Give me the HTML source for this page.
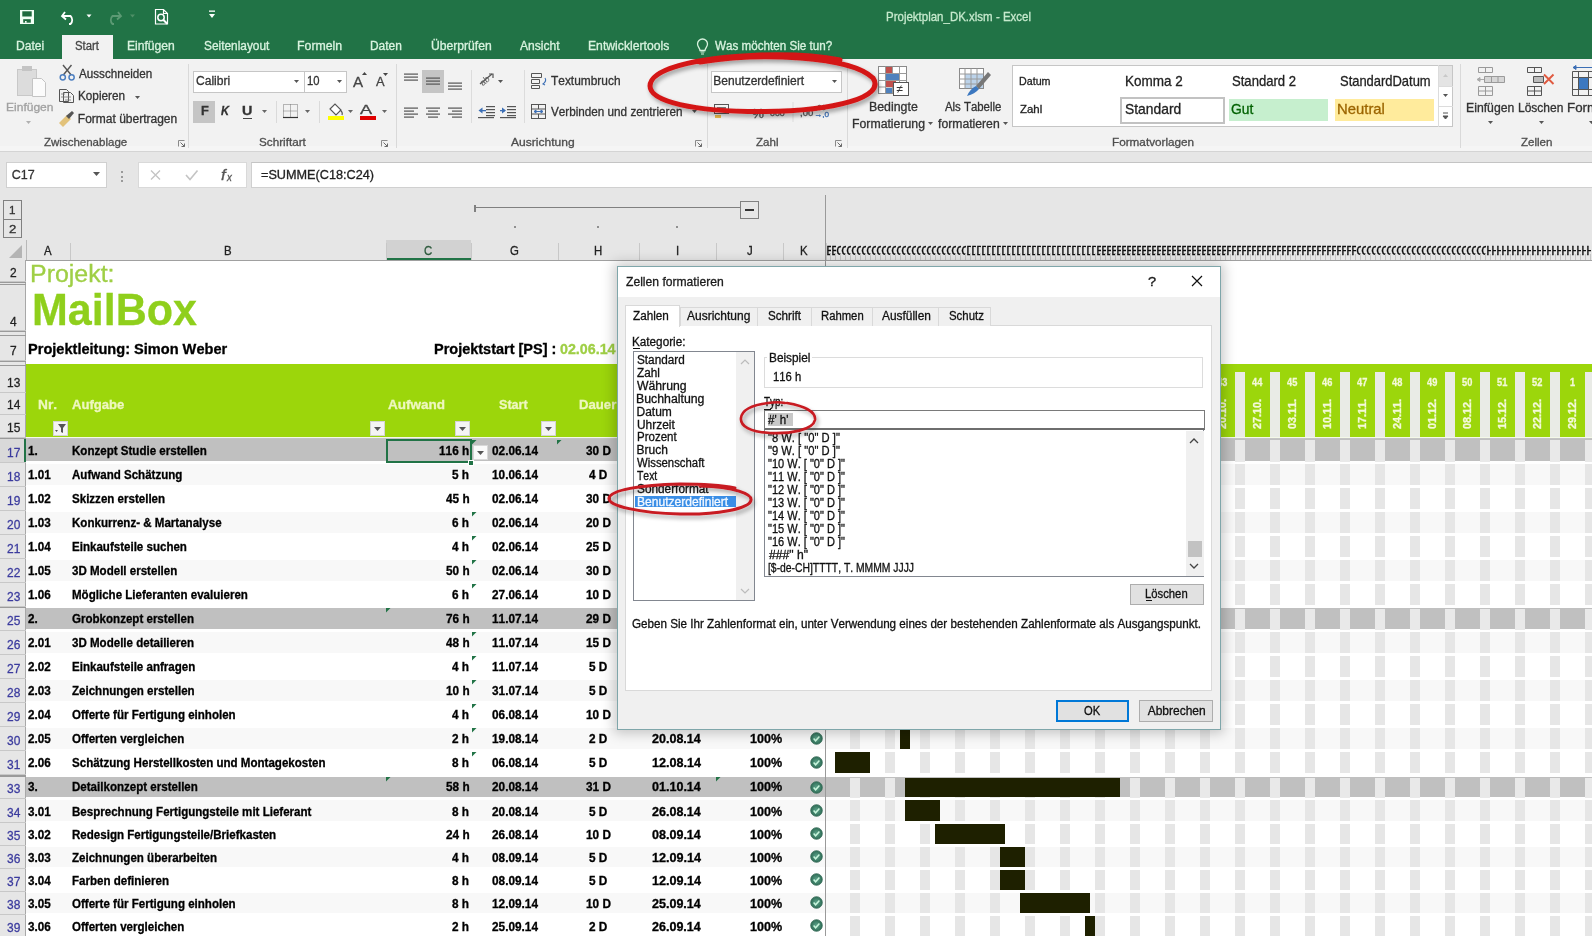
<!DOCTYPE html>
<html><head><meta charset="utf-8">
<style>
*{margin:0;padding:0;box-sizing:border-box}
html,body{width:1592px;height:936px;overflow:hidden;background:#fff;font-family:"Liberation Sans",sans-serif;color:#000;font-kerning:none}
body{will-change:transform}
.a{position:absolute}
.t{position:absolute;white-space:nowrap;line-height:1;transform-origin:0 0}
.k{-webkit-text-stroke:0.25px currentColor}
.t{-webkit-text-stroke:0.3px currentColor}
.t.k{-webkit-text-stroke:0.3px currentColor}
svg{position:absolute;overflow:visible}
</style></head><body>
<div class="a" style="left:0px;top:0px;width:1592px;height:59px;background:#217346;"></div>
<svg style="left:0;top:0" width="240" height="34">
<rect x="20" y="10" width="14" height="14" fill="#f2fff6"/>
<rect x="22.3" y="11.3" width="9.4" height="5.2" fill="#1e6b3e"/>
<rect x="23.2" y="19.2" width="7.6" height="3.5" fill="#1e6b3e"/>
<rect x="25" y="21" width="1.6" height="1.8" fill="#f2fff6"/>
<path d="M65 12 l-3 4 l4 3.5 M62.5 16 h8 a5.5 5.5 0 0 1 0 8 h-1.5" fill="none" stroke="#fff" stroke-width="1.8"/>
<path d="M86.5 14.5h5l-2.5 3z" fill="#fff"/>
<path d="M118 12 l3 4 l-4 3.5 M120.5 16 h-8 a5.5 5.5 0 0 0 0 8 h1.5" fill="none" stroke="#5c9a74" stroke-width="1.8"/>
<path d="M130 14.5h5l-2.5 3z" fill="#4f8f67"/>
<path d="M155.5 9.5h8l4 4v10.5h-12z M163.5 9.5v4h4" fill="none" stroke="#fff" stroke-width="1.2"/>
<circle cx="161" cy="17.5" r="3.2" fill="none" stroke="#fff" stroke-width="1.5"/>
<path d="M163.2 19.7l4 4" stroke="#fff" stroke-width="2"/>
<rect x="209" y="10.5" width="6" height="1.3" fill="#fff"/>
<path d="M209 14h6l-3 4z" fill="#fff"/>
</svg>
<div class="t" style="left:886.46px;top:10.49px;font-size:13px;color:#c6e9cd;transform:scaleX(0.8842);">Projektplan_DK.xlsm - Excel</div>
<div class="a" style="left:62px;top:35px;width:51px;height:25px;background:#f2f2f2;"></div>
<div class="t" style="left:16.31px;top:40.34px;font-size:12px;color:#d9f3df;transform:scaleX(1.0068);">Datei</div>
<div class="t" style="left:74.89px;top:40.34px;font-size:12px;color:#444;transform:scaleX(0.9430);">Start</div>
<div class="t" style="left:127.41px;top:40.34px;font-size:12px;color:#d9f3df;transform:scaleX(1.0086);">Einfügen</div>
<div class="t" style="left:203.56px;top:40.34px;font-size:12px;color:#d9f3df;transform:scaleX(0.9891);">Seitenlayout</div>
<div class="t" style="left:297.29px;top:40.34px;font-size:12px;color:#d9f3df;transform:scaleX(1.0273);">Formeln</div>
<div class="t" style="left:370.32px;top:40.34px;font-size:12px;color:#d9f3df;transform:scaleX(0.9948);">Daten</div>
<div class="t" style="left:430.56px;top:40.34px;font-size:12px;color:#d9f3df;transform:scaleX(1.0115);">Überprüfen</div>
<div class="t" style="left:519.98px;top:40.34px;font-size:12px;color:#d9f3df;transform:scaleX(1.0066);">Ansicht</div>
<div class="t" style="left:588.00px;top:40.34px;font-size:12px;color:#d9f3df;transform:scaleX(1.0151);">Entwicklertools</div>
<div class="t" style="left:714.55px;top:40.34px;font-size:12px;color:#d9f3df;transform:scaleX(0.9715);">Was möchten Sie tun?</div>
<svg style="left:696px;top:39px" width="14" height="16"><path d="M4 11.5 C4 9 1.5 8 1.5 5 A5 5 0 0 1 11.5 5 C11.5 8 9 9 9 11.5z" fill="none" stroke="#d9f3df" stroke-width="1.3"/><path d="M4.5 13h4M5 15h3" stroke="#d9f3df" stroke-width="1.2"/></svg>
<div class="a" style="left:0px;top:59px;width:1592px;height:93px;background:#f2f2f2;"></div>
<div class="a" style="left:0px;top:146px;width:1592px;height:5px;background:#f5f5f5;"></div>
<div class="a" style="left:0px;top:151px;width:1592px;height:1px;background:#d4d4d4;"></div>
<div class="a" style="left:187.5px;top:64px;width:1px;height:84px;background:#d9d9d9;"></div>
<div class="a" style="left:395.5px;top:64px;width:1px;height:84px;background:#d9d9d9;"></div>
<div class="a" style="left:707px;top:64px;width:1px;height:84px;background:#d9d9d9;"></div>
<div class="a" style="left:846.5px;top:64px;width:1px;height:84px;background:#d9d9d9;"></div>
<div class="a" style="left:1460px;top:64px;width:1px;height:84px;background:#d9d9d9;"></div>
<div class="t" style="left:43.83px;top:137.19px;font-size:11px;color:#4e4e4e;transform:scaleX(1.0464);">Zwischenablage</div>
<div class="t" style="left:259.47px;top:137.19px;font-size:11px;color:#4e4e4e;transform:scaleX(1.0638);">Schriftart</div>
<div class="t" style="left:511.18px;top:137.19px;font-size:11px;color:#4e4e4e;transform:scaleX(1.0949);">Ausrichtung</div>
<div class="t" style="left:756.43px;top:137.19px;font-size:11px;color:#4e4e4e;transform:scaleX(1.0486);">Zahl</div>
<div class="t" style="left:1111.84px;top:137.19px;font-size:11px;color:#4e4e4e;transform:scaleX(1.0661);">Formatvorlagen</div>
<div class="t" style="left:1520.63px;top:137.19px;font-size:11px;color:#4e4e4e;transform:scaleX(1.0486);">Zellen</div>
<svg style="left:178px;top:140px" width="8" height="8"><path d="M0.5 6.5v-6h6" fill="none" stroke="#8a8a8a" stroke-width="1"/><path d="M2.5 2.5l4 4M3.5 6.5h3v-3" fill="none" stroke="#6a6a6a" stroke-width="1"/></svg>
<svg style="left:381px;top:140px" width="8" height="8"><path d="M0.5 6.5v-6h6" fill="none" stroke="#8a8a8a" stroke-width="1"/><path d="M2.5 2.5l4 4M3.5 6.5h3v-3" fill="none" stroke="#6a6a6a" stroke-width="1"/></svg>
<svg style="left:695px;top:140px" width="8" height="8"><path d="M0.5 6.5v-6h6" fill="none" stroke="#8a8a8a" stroke-width="1"/><path d="M2.5 2.5l4 4M3.5 6.5h3v-3" fill="none" stroke="#6a6a6a" stroke-width="1"/></svg>
<svg style="left:835px;top:140px" width="8" height="8"><path d="M0.5 6.5v-6h6" fill="none" stroke="#8a8a8a" stroke-width="1"/><path d="M2.5 2.5l4 4M3.5 6.5h3v-3" fill="none" stroke="#6a6a6a" stroke-width="1"/></svg>
<svg style="left:0;top:59px" width="190" height="70">
<rect x="17.5" y="10.5" width="19" height="26" fill="#dcdcdc" stroke="#c8c8c8"/>
<rect x="22" y="7" width="10" height="5" fill="#c4c4c4"/>
<path d="M32.5 19.5h9l4 4v14h-13z" fill="#fbfbfb" stroke="#c4c4c4"/>
<path d="M63 6 l8.2 10 M71.5 6 l-8.2 10" stroke="#555" stroke-width="1.4"/>
<circle cx="62.8" cy="18.3" r="2.6" fill="none" stroke="#4d7fc0" stroke-width="1.5"/>
<circle cx="71.6" cy="18.3" r="2.6" fill="none" stroke="#4d7fc0" stroke-width="1.5"/>
<path d="M59.5 30.5h7l2 2v10h-9z M63.5 33.5h7l3 3v7h-10z" fill="#f1f1f1" stroke="#555"/>
<path d="M61 35h4M61 38h4M65 38h6M65 41h6" stroke="#777" stroke-width="0.8"/>
<path d="M59 64 l8-8 l4 4 l-8 8z" fill="#e2c27a"/>
<path d="M66 57 l6-5 l2 2 l-5 6z" fill="#555"/>
</svg>
<div class="t" style="left:5.61px;top:101.96px;font-size:11.5px;color:#a0a0a0;transform:scaleX(1.0456);">Einfügen</div>
<svg style="left:26px;top:121px" width="6" height="4"><path d="M0 0h5l-2.5 3z" fill="#b0b0b0"/></svg>
<div class="t" style="left:78.78px;top:67.54px;font-size:12px;color:#333;transform:scaleX(0.9721);">Ausschneiden</div>
<div class="t" style="left:77.84px;top:90.24px;font-size:12px;color:#333;transform:scaleX(0.9790);">Kopieren</div>
<svg style="left:135px;top:96px" width="6" height="4"><path d="M0 0h5l-2.5 3z" fill="#555"/></svg>
<div class="t" style="left:77.82px;top:113.24px;font-size:12px;color:#333;">Format übertragen</div>
<div class="a" style="left:193px;top:70.5px;width:154px;height:22px;background:#fff;border:1px solid #c6c6c6;"></div>
<div class="a" style="left:303.5px;top:71px;width:1px;height:21px;background:#c6c6c6;"></div>
<div class="t" style="left:195.99px;top:75.24px;font-size:12px;color:#333;transform:scaleX(1.0064);">Calibri</div>
<div class="t" style="left:306.94px;top:75.24px;font-size:12px;color:#333;transform:scaleX(0.9361);">10</div>
<svg style="left:294px;top:80px" width="6" height="4"><path d="M0 0h5l-2.5 3z" fill="#555"/></svg>
<svg style="left:337px;top:80px" width="6" height="4"><path d="M0 0h5l-2.5 3z" fill="#555"/></svg>
<div class="t" style="left:352.97px;top:73.70px;font-size:15px;color:#444;transform:scaleX(1.0054);">A</div>
<svg style="left:362px;top:72px" width="6" height="4"><path d="M0 3h5l-2.5-3z" fill="#444"/></svg>
<div class="t" style="left:375.97px;top:76.24px;font-size:12px;color:#444;transform:scaleX(1.0682);">A</div>
<svg style="left:383px;top:73px" width="6" height="4"><path d="M0 0h5l-2.5 3z" fill="#444"/></svg>
<div class="a" style="left:193px;top:100.5px;width:22px;height:22.5px;background:#c5c5c5;"></div>
<div class="t" style="left:200.64px;top:105.44px;font-size:12px;font-weight:bold;color:#333;transform:scaleX(1.0677);">F</div>
<div class="t" style="left:221.30px;top:105.44px;font-size:12px;font-weight:bold;font-style:italic;color:#333;transform:scaleX(0.9258);">K</div>
<div class="t" style="left:242.14px;top:105.44px;font-size:12px;font-weight:bold;color:#333;transform:scaleX(1.1923);">U</div>
<div class="a" style="left:243px;top:117.5px;width:9px;height:1px;background:#444;"></div>
<svg style="left:262px;top:110px" width="6" height="4"><path d="M0 0h5l-2.5 3z" fill="#666"/></svg>
<div class="a" style="left:276px;top:101px;width:1px;height:22px;background:#dadada;"></div>
<svg style="left:283px;top:104px" width="16" height="14"><path d="M0.5 0.5h14v13h-14zM7.5 0.5v13M0.5 7h14" fill="none" stroke="#777" stroke-width="1" stroke-dasharray="1 1"/><path d="M0 13.5h15" stroke="#333" stroke-width="1.2"/></svg>
<svg style="left:305px;top:110px" width="6" height="4"><path d="M0 0h5l-2.5 3z" fill="#666"/></svg>
<div class="a" style="left:319px;top:101px;width:1px;height:22px;background:#dadada;"></div>
<svg style="left:327px;top:102px" width="18" height="19"><path d="M3 7l5-5 6 6-5 5z" fill="#fff" stroke="#555" stroke-width="1.1"/><path d="M13 8 q3 2 2 5" fill="none" stroke="#555" stroke-width="1.2"/><rect x="1" y="14" width="16" height="4" fill="#ffff00"/></svg>
<svg style="left:348px;top:110px" width="6" height="4"><path d="M0 0h5l-2.5 3z" fill="#666"/></svg>
<div class="t" style="left:360.46px;top:103.49px;font-size:13px;color:#444;transform:scaleX(1.3921);">A</div>
<div class="a" style="left:360px;top:115.5px;width:16px;height:4.5px;background:#e00000;"></div>
<svg style="left:382px;top:110px" width="6" height="4"><path d="M0 0h5l-2.5 3z" fill="#666"/></svg>
<div class="a" style="left:422px;top:70px;width:22px;height:22.5px;background:#c5c5c5;"></div>
<svg style="left:0;top:0" width="720" height="152"><rect x="404" y="73.5" width="14" height="1.2" fill="#555"/><rect x="404" y="76.5" width="14" height="1.2" fill="#555"/><rect x="404" y="79.5" width="14" height="1.2" fill="#555"/><rect x="426" y="77.5" width="14" height="1.2" fill="#555"/><rect x="426" y="80.5" width="14" height="1.2" fill="#555"/><rect x="426" y="83.5" width="14" height="1.2" fill="#555"/><rect x="448" y="82.5" width="14" height="1.2" fill="#555"/><rect x="448" y="85.5" width="14" height="1.2" fill="#555"/><rect x="448" y="88.5" width="14" height="1.2" fill="#555"/><rect x="404" y="107.5" width="14" height="1.2" fill="#555"/><rect x="404" y="110.5" width="10" height="1.2" fill="#555"/><rect x="404" y="113.5" width="14" height="1.2" fill="#555"/><rect x="404" y="116.5" width="10" height="1.2" fill="#555"/><rect x="426" y="107.5" width="14" height="1.2" fill="#555"/><rect x="428" y="110.5" width="10" height="1.2" fill="#555"/><rect x="426" y="113.5" width="14" height="1.2" fill="#555"/><rect x="428" y="116.5" width="10" height="1.2" fill="#555"/><rect x="448" y="107.5" width="14" height="1.2" fill="#555"/><rect x="452" y="110.5" width="10" height="1.2" fill="#555"/><rect x="448" y="113.5" width="14" height="1.2" fill="#555"/><rect x="452" y="116.5" width="10" height="1.2" fill="#555"/><path d="M480 84 l12-10" stroke="#555" stroke-width="1.3"/><path d="M489 74h4v4" fill="none" stroke="#555" stroke-width="1.2"/>
<text x="479" y="84" font-size="9" fill="#555" transform="rotate(-40 484 80)" font-family="Liberation Sans">ab</text>
<path d="M498 80h5l-2.5 3z" fill="#555"/><rect x="486" y="106" width="9" height="1.2" fill="#555"/><rect x="486" y="109" width="9" height="1.2" fill="#555"/><rect x="486" y="112" width="9" height="1.2" fill="#555"/><rect x="486" y="115" width="9" height="1.2" fill="#555"/><rect x="478" y="117" width="16" height="1.2" fill="#555"/><path d="M478.5 110.5l4-3v6z" fill="#3c6fb5"/><rect x="481" y="110" width="5" height="1.3" fill="#3c6fb5"/><rect x="507" y="106" width="9" height="1.2" fill="#555"/><rect x="507" y="109" width="9" height="1.2" fill="#555"/><rect x="507" y="112" width="9" height="1.2" fill="#555"/><rect x="507" y="115" width="9" height="1.2" fill="#555"/><rect x="500" y="117" width="16" height="1.2" fill="#555"/><path d="M506 110.5l-4-3v6z" fill="#3c6fb5"/><rect x="500" y="110" width="5" height="1.3" fill="#3c6fb5"/><path d="M531.5 73.5h10v4h-10z M531.5 79.5h8v4h-8z M531.5 85.5h8v3h-8z" fill="none" stroke="#555" stroke-width="1"/>
<path d="M545 78 q2 3 -2 6 l2 1" fill="none" stroke="#3c6fb5" stroke-width="1.1"/>
<rect x="531.5" y="104.5" width="14" height="14" fill="none" stroke="#555" stroke-width="1"/>
<path d="M531.5 109h14M531.5 114h14M538.5 104.5v4.5M538.5 114v4.5" stroke="#555" stroke-width="1"/>
<path d="M534 111.5h9M534 111.5l2-1.5v3zM543 111.5l-2-1.5v3z" stroke="#3c6fb5" fill="#3c6fb5" stroke-width="1"/>
<path d="M692 110h5l-2.5 3z" fill="#555"/>
</svg>
<div class="a" style="left:470.5px;top:70px;width:1px;height:53px;background:#dcdcdc;"></div>
<div class="a" style="left:523.5px;top:70px;width:1px;height:53px;background:#dcdcdc;"></div>
<div class="t" style="left:550.53px;top:75.24px;font-size:12px;color:#333;transform:scaleX(0.9931);">Textumbruch</div>
<div class="t" style="left:550.75px;top:106.24px;font-size:12px;color:#333;transform:scaleX(0.9752);">Verbinden und zentrieren</div>
<div class="a" style="left:711px;top:70.5px;width:130.5px;height:22px;background:#fff;border:1px solid #c6c6c6;"></div>
<div class="t" style="left:713.32px;top:75.44px;font-size:12px;color:#333;">Benutzerdefiniert</div>
<svg style="left:832px;top:80px" width="6" height="4"><path d="M0 0h5l-2.5 3z" fill="#555"/></svg>
<svg style="left:0;top:0" width="850" height="152">
<rect x="714.5" y="104.5" width="14" height="9" fill="none" stroke="#555" stroke-width="1"/>
<rect x="717" y="107" width="9" height="4" fill="#777"/>
<rect x="715" y="115" width="6" height="3" fill="#e8b84a"/>
<path d="M735 110h4l-2 2.5z" fill="#777"/>
<path d="M793 102v20" stroke="#dcdcdc"/>
</svg>
<div class="t" style="left:751.52px;top:106.99px;font-size:13px;color:#555;transform:scaleX(1.0346);">%</div>
<div class="t" style="left:769.66px;top:110.23px;font-size:8px;color:#555;transform:scaleX(1.1004);">000</div>
<div class="t" style="left:800.15px;top:109.38px;font-size:9px;color:#555;transform:scaleX(1.0572);">,00</div>
<div class="t" style="left:815.29px;top:104.23px;font-size:8px;color:#555;transform:scaleX(0.9911);">,00</div>
<div class="t" style="left:814.33px;top:111.23px;font-size:8px;color:#3c6fb5;transform:scaleX(1.0215);">→,0</div>
<svg style="left:878px;top:66px" width="34" height="32">
<rect x="0.5" y="0.5" width="28" height="27" fill="#fff" stroke="#8a8a8a"/>
<path d="M0.5 7.5h28M0.5 14.5h28M0.5 21h28M7.5 0.5v27M14.5 0.5v27M21.5 0.5v27" stroke="#9a9a9a" stroke-width="1"/>
<rect x="8" y="1" width="6" height="6" fill="#c0504d"/>
<rect x="8" y="8" width="13" height="6" fill="#4f81bd"/>
<rect x="8" y="15" width="10" height="6" fill="#c0504d"/>
<rect x="8" y="22" width="6" height="5" fill="#4f81bd"/>
<rect x="15.5" y="16.5" width="15" height="13" fill="#fff" stroke="#555"/>
<text x="18.5" y="27" font-size="12" fill="#333" font-family="Liberation Sans">≠</text>
</svg>
<div class="t" style="left:869.19px;top:101.44px;font-size:12px;color:#333;transform:scaleX(1.0293);">Bedingte</div>
<div class="t" style="left:852.19px;top:117.84px;font-size:12px;color:#333;transform:scaleX(1.0229);">Formatierung</div>
<svg style="left:928px;top:122px" width="6" height="4"><path d="M0 0h5l-2.5 3z" fill="#555"/></svg>
<svg style="left:959px;top:68px" width="34" height="30">
<rect x="0.5" y="0.5" width="24" height="20" fill="#fff" stroke="#8a8a8a"/>
<rect x="6" y="6" width="18" height="14" fill="#bcd3ea"/>
<path d="M0.5 6h24M0.5 11h24M0.5 16h24M6 0.5v20M12 0.5v20M18 0.5v20" stroke="#9a9a9a" stroke-width="1"/>
<path d="M29 4 l3 3 l-12 14 l-3 -3z" fill="#777"/>
<path d="M17 18 q-6 3 -9 10 q8 -2 12 -7z" fill="#3c78c0"/>
</svg>
<div class="t" style="left:945.18px;top:101.44px;font-size:12px;color:#333;transform:scaleX(0.9489);">Als Tabelle</div>
<div class="t" style="left:938.33px;top:117.84px;font-size:12px;color:#333;transform:scaleX(1.0160);">formatieren</div>
<svg style="left:1003px;top:122px" width="6" height="4"><path d="M0 0h5l-2.5 3z" fill="#555"/></svg>
<div class="a" style="left:1012px;top:65px;width:441px;height:62px;background:#fff;border:1px solid #c6c6c6;"></div>
<div class="t" style="left:1019.42px;top:76.49px;font-size:11px;color:#222;transform:scaleX(0.9717);">Datum</div>
<div class="t" style="left:1019.94px;top:104.09px;font-size:11px;color:#222;transform:scaleX(1.0387);">Zahl</div>
<div class="t" style="left:1124.89px;top:73.62px;font-size:14.5px;color:#222;transform:scaleX(0.9313);">Komma 2</div>
<div class="t" style="left:1231.61px;top:73.62px;font-size:14.5px;color:#222;transform:scaleX(0.9029);">Standard 2</div>
<div class="t" style="left:1339.61px;top:73.62px;font-size:14.5px;color:#222;transform:scaleX(0.8925);">StandardDatum</div>
<div class="a" style="left:1119.5px;top:96.5px;width:105.5px;height:27px;background:#fff;border:2px solid #c2c2c2;"></div>
<div class="t" style="left:1125.37px;top:102.02px;font-size:14.5px;color:#222;transform:scaleX(0.9553);">Standard</div>
<div class="a" style="left:1228.5px;top:99px;width:99px;height:21.5px;background:#c6efce;"></div>
<div class="t" style="left:1231.30px;top:102.02px;font-size:14.5px;color:#006100;transform:scaleX(0.9540);">Gut</div>
<div class="a" style="left:1334.5px;top:99px;width:99px;height:21.5px;background:#ffeb9c;"></div>
<div class="t" style="left:1337.28px;top:102.02px;font-size:14.5px;color:#9c6500;transform:scaleX(1.0250);">Neutral</div>
<div class="a" style="left:1438px;top:65px;width:1px;height:62px;background:#dcdcdc;"></div>
<div class="a" style="left:1439px;top:66px;width:13px;height:20px;background:#e4e4e4;"></div>
<div class="a" style="left:1438px;top:86px;width:15px;height:1px;background:#dcdcdc;"></div>
<div class="a" style="left:1438px;top:106px;width:15px;height:1px;background:#dcdcdc;"></div>
<svg style="left:1439px;top:66px" width="14" height="60">
<path d="M4 11h5l-2.5-3z" fill="#c8c8c8"/>
<path d="M4 28h5l-2.5 3z" fill="#555"/>
<path d="M4 47h5M4 50h5l-2.5 3z" stroke="#555" fill="#555" stroke-width="1"/>
</svg>
<svg style="left:1470px;top:64px" width="122" height="34">
<g fill="none" stroke="#9a9a9a" stroke-width="1">
<path d="M8.5 3.5h14v5h-14zM15.5 3.5v5"/>
<path d="M14.5 12.5h20v6h-20zM21.5 12.5v6M28 12.5v6" fill="#d6d6d6"/>
<path d="M8.5 22.5h14v9h-14zM15.5 22.5v9M8.5 27h14"/>
</g>
<path d="M7 15.5h7M7 15.5l3-2v4z" stroke="#aaa" fill="#aaa" stroke-width="1"/>
<g fill="none" stroke="#555" stroke-width="1">
<path d="M57.5 3.5h14v5h-14zM64.5 3.5v5"/>
<path d="M57.5 22.5h14v9h-14zM64.5 22.5v9M57.5 27h14"/>
<path d="M63.5 12.5h10v6h-10z" fill="#bcbcbc"/>
</g>
<path d="M74 10.5l9.5 9.5M83.5 10.5l-9.5 9.5" stroke="#e05a40" stroke-width="1.9"/>
<path d="M103 3.5h19M103 3.5l3-2v4z" stroke="#3c6fb5" fill="#3c6fb5" stroke-width="1"/>
<g fill="none" stroke="#555" stroke-width="1"><path d="M102.5 7.5h22v24h-22zM102.5 13.5h22M102.5 25.5h22M108.5 7.5v24M118.5 7.5v24"/></g>
<rect x="109" y="14" width="9" height="11" fill="#3c78c0"/>
</svg>
<div class="t" style="left:1466.10px;top:101.64px;font-size:12px;color:#333;transform:scaleX(1.0195);">Einfügen</div>
<div class="t" style="left:1518.02px;top:101.64px;font-size:12px;color:#333;">Löschen</div>
<div class="t" style="left:1566.91px;top:101.64px;font-size:12px;color:#333;transform:scaleX(1.1102);">Format</div>
<svg style="left:1488px;top:121px" width="6" height="4"><path d="M0 0h5l-2.5 3z" fill="#555"/></svg>
<svg style="left:1539px;top:121px" width="6" height="4"><path d="M0 0h5l-2.5 3z" fill="#555"/></svg>
<svg style="left:1589px;top:121px" width="6" height="4"><path d="M0 0h5l-2.5 3z" fill="#555"/></svg>
<div class="a" style="left:0px;top:152px;width:1592px;height:88px;background:#e6e6e6;"></div>
<div class="a" style="left:6px;top:162px;width:100.5px;height:25.5px;background:#fff;border:1px solid #d0d0d0;"></div>
<div class="t" style="left:11.76px;top:168.72px;font-size:12.5px;color:#333;">C17</div>
<svg style="left:93px;top:172px" width="8" height="5"><path d="M0 0h7l-3.5 4z" fill="#555"/></svg>
<div class="a" style="left:121px;top:171px;width:2px;height:2px;background:#9a9a9a;"></div>
<div class="a" style="left:121px;top:175.5px;width:2px;height:2px;background:#9a9a9a;"></div>
<div class="a" style="left:121px;top:180px;width:2px;height:2px;background:#9a9a9a;"></div>
<div class="a" style="left:137.5px;top:162px;width:109px;height:26px;background:#fff;border:1px solid #d9d9d9;"></div>
<svg style="left:0;top:150px" width="250" height="40">
<path d="M151 20.5l9 9M160 20.5l-9 9" stroke="#c4c4c4" stroke-width="1.4"/>
<path d="M186 25l4 4.5l7.5-9" fill="none" stroke="#c4c4c4" stroke-width="1.6"/>
</svg>
<div class="t" style="left:220.94px;top:167.65px;font-size:14px;font-style:italic;color:#555;transform:scaleX(1.1884);font-family:"Liberation Serif";">f</div>
<div class="t" style="left:227.39px;top:172.53px;font-size:10px;font-style:italic;color:#555;transform:scaleX(0.9660);font-family:"Liberation Serif";">x</div>
<div class="a" style="left:250.5px;top:162px;width:1342px;height:26px;background:#fff;border:1px solid #d0d0d0;border-top-color:#c4c4c4;border-right:none;"></div>
<div class="t" style="left:261.38px;top:168.62px;font-size:12.5px;color:#222;transform:scaleX(1.0136);">=SUMME(C18:C24)</div>
<div class="a" style="left:3px;top:200px;width:19px;height:37.5px;background:#e6e6e6;border:1px solid #808080;"></div>
<div class="a" style="left:3px;top:218.5px;width:19px;height:1px;background:#808080;"></div>
<div class="t" style="left:9.12px;top:204.69px;font-size:11px;color:#333;transform:scaleX(1.0543);">1</div>
<div class="t" style="left:8.84px;top:223.69px;font-size:11px;color:#333;transform:scaleX(1.1973);">2</div>
<div class="a" style="left:474px;top:206.5px;width:266px;height:1.5px;background:#808080;"></div>
<div class="a" style="left:474px;top:205px;width:1.5px;height:7px;background:#808080;"></div>
<div class="a" style="left:740px;top:200.5px;width:19px;height:18.5px;background:#e6e6e6;border:1px solid #808080;"></div>
<div class="a" style="left:745px;top:209px;width:9px;height:1.5px;background:#333;"></div>
<div class="a" style="left:514px;top:225.5px;width:2px;height:2px;background:#909090;"></div>
<div class="a" style="left:597px;top:225.5px;width:2px;height:2px;background:#909090;"></div>
<div class="a" style="left:676px;top:225.5px;width:2px;height:2px;background:#909090;"></div>
<div class="a" style="left:0px;top:240px;width:1592px;height:20.5px;background:#e6e6e6;"></div>
<div class="a" style="left:0px;top:260px;width:1592px;height:1px;background:#a0a0a0;"></div>
<svg style="left:8px;top:244px" width="15" height="15"><path d="M14 1v13h-13z" fill="#b4b4b4"/></svg>
<div class="a" style="left:26px;top:240px;width:1px;height:20px;background:#b8b8b8;"></div>
<div class="a" style="left:386px;top:240px;width:84.5px;height:20px;background:#d2d2d2;"></div>
<div class="a" style="left:386px;top:258px;width:84.5px;height:2px;background:#217346;"></div>
<div class="a" style="left:70px;top:243px;width:1px;height:17px;background:#c8c8c8;"></div>
<div class="t" style="left:44.20px;top:244.84px;font-size:12px;color:#222;transform:scaleX(0.9500);">A</div>
<div class="a" style="left:386px;top:243px;width:1px;height:17px;background:#c8c8c8;"></div>
<div class="t" style="left:224.03px;top:244.84px;font-size:12px;color:#222;transform:scaleX(0.9500);">B</div>
<div class="a" style="left:470.5px;top:243px;width:1px;height:17px;background:#c8c8c8;"></div>
<div class="t" style="left:424.06px;top:244.84px;font-size:12px;color:#2d5a3d;transform:scaleX(0.9500);">C</div>
<div class="a" style="left:558px;top:243px;width:1px;height:17px;background:#c8c8c8;"></div>
<div class="t" style="left:509.96px;top:244.84px;font-size:12px;color:#222;transform:scaleX(0.9500);">G</div>
<div class="a" style="left:638.5px;top:243px;width:1px;height:17px;background:#c8c8c8;"></div>
<div class="t" style="left:594.13px;top:244.84px;font-size:12px;color:#222;transform:scaleX(0.9500);">H</div>
<div class="a" style="left:716px;top:243px;width:1px;height:17px;background:#c8c8c8;"></div>
<div class="t" style="left:675.67px;top:244.84px;font-size:12px;color:#222;transform:scaleX(0.9500);">I</div>
<div class="a" style="left:783px;top:243px;width:1px;height:17px;background:#c8c8c8;"></div>
<div class="t" style="left:746.98px;top:244.84px;font-size:12px;color:#222;transform:scaleX(0.9500);">J</div>
<div class="a" style="left:825.5px;top:243px;width:1px;height:17px;background:#c8c8c8;"></div>
<div class="t" style="left:800.04px;top:244.84px;font-size:12px;color:#222;transform:scaleX(0.9500);">K</div>
<div class="a" style="left:826px;top:242px;width:5px;height:18px;overflow:hidden"><div class="t k" style="left:0.3px;top:3.2px;font-size:12.5px;color:#111">E</div><div class="a" style="left:4px;top:12px;width:1px;height:6px;background:#c4c4c4"></div></div><div class="a" style="left:831px;top:242px;width:5px;height:18px;overflow:hidden"><div class="t k" style="left:0.3px;top:3.2px;font-size:12.5px;color:#111">E</div><div class="a" style="left:4px;top:12px;width:1px;height:6px;background:#c4c4c4"></div></div><div class="a" style="left:836px;top:242px;width:5px;height:18px;overflow:hidden"><div class="t k" style="left:0.3px;top:3.2px;font-size:12.5px;color:#111">C</div><div class="a" style="left:4px;top:12px;width:1px;height:6px;background:#c4c4c4"></div></div><div class="a" style="left:841px;top:242px;width:5px;height:18px;overflow:hidden"><div class="t k" style="left:0.3px;top:3.2px;font-size:12.5px;color:#111">C</div><div class="a" style="left:4px;top:12px;width:1px;height:6px;background:#c4c4c4"></div></div><div class="a" style="left:846px;top:242px;width:5px;height:18px;overflow:hidden"><div class="t k" style="left:0.3px;top:3.2px;font-size:12.5px;color:#111">C</div><div class="a" style="left:4px;top:12px;width:1px;height:6px;background:#c4c4c4"></div></div><div class="a" style="left:851px;top:242px;width:5px;height:18px;overflow:hidden"><div class="t k" style="left:0.3px;top:3.2px;font-size:12.5px;color:#111">C</div><div class="a" style="left:4px;top:12px;width:1px;height:6px;background:#c4c4c4"></div></div><div class="a" style="left:856px;top:242px;width:5px;height:18px;overflow:hidden"><div class="t k" style="left:0.3px;top:3.2px;font-size:12.5px;color:#111">C</div><div class="a" style="left:4px;top:12px;width:1px;height:6px;background:#c4c4c4"></div></div><div class="a" style="left:861px;top:242px;width:5px;height:18px;overflow:hidden"><div class="t k" style="left:0.3px;top:3.2px;font-size:12.5px;color:#111">C</div><div class="a" style="left:4px;top:12px;width:1px;height:6px;background:#c4c4c4"></div></div><div class="a" style="left:866px;top:242px;width:5px;height:18px;overflow:hidden"><div class="t k" style="left:0.3px;top:3.2px;font-size:12.5px;color:#111">C</div><div class="a" style="left:4px;top:12px;width:1px;height:6px;background:#c4c4c4"></div></div><div class="a" style="left:871px;top:242px;width:5px;height:18px;overflow:hidden"><div class="t k" style="left:0.3px;top:3.2px;font-size:12.5px;color:#111">C</div><div class="a" style="left:4px;top:12px;width:1px;height:6px;background:#c4c4c4"></div></div><div class="a" style="left:876px;top:242px;width:5px;height:18px;overflow:hidden"><div class="t k" style="left:0.3px;top:3.2px;font-size:12.5px;color:#111">C</div><div class="a" style="left:4px;top:12px;width:1px;height:6px;background:#c4c4c4"></div></div><div class="a" style="left:881px;top:242px;width:5px;height:18px;overflow:hidden"><div class="t k" style="left:0.3px;top:3.2px;font-size:12.5px;color:#111">C</div><div class="a" style="left:4px;top:12px;width:1px;height:6px;background:#c4c4c4"></div></div><div class="a" style="left:886px;top:242px;width:5px;height:18px;overflow:hidden"><div class="t k" style="left:0.3px;top:3.2px;font-size:12.5px;color:#111">C</div><div class="a" style="left:4px;top:12px;width:1px;height:6px;background:#c4c4c4"></div></div><div class="a" style="left:891px;top:242px;width:5px;height:18px;overflow:hidden"><div class="t k" style="left:0.3px;top:3.2px;font-size:12.5px;color:#111">C</div><div class="a" style="left:4px;top:12px;width:1px;height:6px;background:#c4c4c4"></div></div><div class="a" style="left:896px;top:242px;width:5px;height:18px;overflow:hidden"><div class="t k" style="left:0.3px;top:3.2px;font-size:12.5px;color:#111">C</div><div class="a" style="left:4px;top:12px;width:1px;height:6px;background:#c4c4c4"></div></div><div class="a" style="left:901px;top:242px;width:5px;height:18px;overflow:hidden"><div class="t k" style="left:0.3px;top:3.2px;font-size:12.5px;color:#111">C</div><div class="a" style="left:4px;top:12px;width:1px;height:6px;background:#c4c4c4"></div></div><div class="a" style="left:906px;top:242px;width:5px;height:18px;overflow:hidden"><div class="t k" style="left:0.3px;top:3.2px;font-size:12.5px;color:#111">C</div><div class="a" style="left:4px;top:12px;width:1px;height:6px;background:#c4c4c4"></div></div><div class="a" style="left:911px;top:242px;width:5px;height:18px;overflow:hidden"><div class="t k" style="left:0.3px;top:3.2px;font-size:12.5px;color:#111">C</div><div class="a" style="left:4px;top:12px;width:1px;height:6px;background:#c4c4c4"></div></div><div class="a" style="left:916px;top:242px;width:5px;height:18px;overflow:hidden"><div class="t k" style="left:0.3px;top:3.2px;font-size:12.5px;color:#111">C</div><div class="a" style="left:4px;top:12px;width:1px;height:6px;background:#c4c4c4"></div></div><div class="a" style="left:921px;top:242px;width:5px;height:18px;overflow:hidden"><div class="t k" style="left:0.3px;top:3.2px;font-size:12.5px;color:#111">C</div><div class="a" style="left:4px;top:12px;width:1px;height:6px;background:#c4c4c4"></div></div><div class="a" style="left:926px;top:242px;width:5px;height:18px;overflow:hidden"><div class="t k" style="left:0.3px;top:3.2px;font-size:12.5px;color:#111">C</div><div class="a" style="left:4px;top:12px;width:1px;height:6px;background:#c4c4c4"></div></div><div class="a" style="left:931px;top:242px;width:5px;height:18px;overflow:hidden"><div class="t k" style="left:0.3px;top:3.2px;font-size:12.5px;color:#111">C</div><div class="a" style="left:4px;top:12px;width:1px;height:6px;background:#c4c4c4"></div></div><div class="a" style="left:936px;top:242px;width:5px;height:18px;overflow:hidden"><div class="t k" style="left:0.3px;top:3.2px;font-size:12.5px;color:#111">C</div><div class="a" style="left:4px;top:12px;width:1px;height:6px;background:#c4c4c4"></div></div><div class="a" style="left:941px;top:242px;width:5px;height:18px;overflow:hidden"><div class="t k" style="left:0.3px;top:3.2px;font-size:12.5px;color:#111">C</div><div class="a" style="left:4px;top:12px;width:1px;height:6px;background:#c4c4c4"></div></div><div class="a" style="left:946px;top:242px;width:5px;height:18px;overflow:hidden"><div class="t k" style="left:0.3px;top:3.2px;font-size:12.5px;color:#111">C</div><div class="a" style="left:4px;top:12px;width:1px;height:6px;background:#c4c4c4"></div></div><div class="a" style="left:951px;top:242px;width:5px;height:18px;overflow:hidden"><div class="t k" style="left:0.3px;top:3.2px;font-size:12.5px;color:#111">C</div><div class="a" style="left:4px;top:12px;width:1px;height:6px;background:#c4c4c4"></div></div><div class="a" style="left:956px;top:242px;width:5px;height:18px;overflow:hidden"><div class="t k" style="left:0.3px;top:3.2px;font-size:12.5px;color:#111">C</div><div class="a" style="left:4px;top:12px;width:1px;height:6px;background:#c4c4c4"></div></div><div class="a" style="left:961px;top:242px;width:5px;height:18px;overflow:hidden"><div class="t k" style="left:0.3px;top:3.2px;font-size:12.5px;color:#111">C</div><div class="a" style="left:4px;top:12px;width:1px;height:6px;background:#c4c4c4"></div></div><div class="a" style="left:966px;top:242px;width:5px;height:18px;overflow:hidden"><div class="t k" style="left:0.3px;top:3.2px;font-size:12.5px;color:#111">D</div><div class="a" style="left:4px;top:12px;width:1px;height:6px;background:#c4c4c4"></div></div><div class="a" style="left:971px;top:242px;width:5px;height:18px;overflow:hidden"><div class="t k" style="left:0.3px;top:3.2px;font-size:12.5px;color:#111">D</div><div class="a" style="left:4px;top:12px;width:1px;height:6px;background:#c4c4c4"></div></div><div class="a" style="left:976px;top:242px;width:5px;height:18px;overflow:hidden"><div class="t k" style="left:0.3px;top:3.2px;font-size:12.5px;color:#111">D</div><div class="a" style="left:4px;top:12px;width:1px;height:6px;background:#c4c4c4"></div></div><div class="a" style="left:981px;top:242px;width:5px;height:18px;overflow:hidden"><div class="t k" style="left:0.3px;top:3.2px;font-size:12.5px;color:#111">D</div><div class="a" style="left:4px;top:12px;width:1px;height:6px;background:#c4c4c4"></div></div><div class="a" style="left:986px;top:242px;width:5px;height:18px;overflow:hidden"><div class="t k" style="left:0.3px;top:3.2px;font-size:12.5px;color:#111">D</div><div class="a" style="left:4px;top:12px;width:1px;height:6px;background:#c4c4c4"></div></div><div class="a" style="left:991px;top:242px;width:5px;height:18px;overflow:hidden"><div class="t k" style="left:0.3px;top:3.2px;font-size:12.5px;color:#111">D</div><div class="a" style="left:4px;top:12px;width:1px;height:6px;background:#c4c4c4"></div></div><div class="a" style="left:996px;top:242px;width:5px;height:18px;overflow:hidden"><div class="t k" style="left:0.3px;top:3.2px;font-size:12.5px;color:#111">D</div><div class="a" style="left:4px;top:12px;width:1px;height:6px;background:#c4c4c4"></div></div><div class="a" style="left:1001px;top:242px;width:5px;height:18px;overflow:hidden"><div class="t k" style="left:0.3px;top:3.2px;font-size:12.5px;color:#111">D</div><div class="a" style="left:4px;top:12px;width:1px;height:6px;background:#c4c4c4"></div></div><div class="a" style="left:1006px;top:242px;width:5px;height:18px;overflow:hidden"><div class="t k" style="left:0.3px;top:3.2px;font-size:12.5px;color:#111">D</div><div class="a" style="left:4px;top:12px;width:1px;height:6px;background:#c4c4c4"></div></div><div class="a" style="left:1011px;top:242px;width:5px;height:18px;overflow:hidden"><div class="t k" style="left:0.3px;top:3.2px;font-size:12.5px;color:#111">D</div><div class="a" style="left:4px;top:12px;width:1px;height:6px;background:#c4c4c4"></div></div><div class="a" style="left:1016px;top:242px;width:5px;height:18px;overflow:hidden"><div class="t k" style="left:0.3px;top:3.2px;font-size:12.5px;color:#111">D</div><div class="a" style="left:4px;top:12px;width:1px;height:6px;background:#c4c4c4"></div></div><div class="a" style="left:1021px;top:242px;width:5px;height:18px;overflow:hidden"><div class="t k" style="left:0.3px;top:3.2px;font-size:12.5px;color:#111">D</div><div class="a" style="left:4px;top:12px;width:1px;height:6px;background:#c4c4c4"></div></div><div class="a" style="left:1026px;top:242px;width:5px;height:18px;overflow:hidden"><div class="t k" style="left:0.3px;top:3.2px;font-size:12.5px;color:#111">D</div><div class="a" style="left:4px;top:12px;width:1px;height:6px;background:#c4c4c4"></div></div><div class="a" style="left:1031px;top:242px;width:5px;height:18px;overflow:hidden"><div class="t k" style="left:0.3px;top:3.2px;font-size:12.5px;color:#111">D</div><div class="a" style="left:4px;top:12px;width:1px;height:6px;background:#c4c4c4"></div></div><div class="a" style="left:1036px;top:242px;width:5px;height:18px;overflow:hidden"><div class="t k" style="left:0.3px;top:3.2px;font-size:12.5px;color:#111">D</div><div class="a" style="left:4px;top:12px;width:1px;height:6px;background:#c4c4c4"></div></div><div class="a" style="left:1041px;top:242px;width:5px;height:18px;overflow:hidden"><div class="t k" style="left:0.3px;top:3.2px;font-size:12.5px;color:#111">D</div><div class="a" style="left:4px;top:12px;width:1px;height:6px;background:#c4c4c4"></div></div><div class="a" style="left:1046px;top:242px;width:5px;height:18px;overflow:hidden"><div class="t k" style="left:0.3px;top:3.2px;font-size:12.5px;color:#111">D</div><div class="a" style="left:4px;top:12px;width:1px;height:6px;background:#c4c4c4"></div></div><div class="a" style="left:1051px;top:242px;width:5px;height:18px;overflow:hidden"><div class="t k" style="left:0.3px;top:3.2px;font-size:12.5px;color:#111">D</div><div class="a" style="left:4px;top:12px;width:1px;height:6px;background:#c4c4c4"></div></div><div class="a" style="left:1056px;top:242px;width:5px;height:18px;overflow:hidden"><div class="t k" style="left:0.3px;top:3.2px;font-size:12.5px;color:#111">D</div><div class="a" style="left:4px;top:12px;width:1px;height:6px;background:#c4c4c4"></div></div><div class="a" style="left:1061px;top:242px;width:5px;height:18px;overflow:hidden"><div class="t k" style="left:0.3px;top:3.2px;font-size:12.5px;color:#111">D</div><div class="a" style="left:4px;top:12px;width:1px;height:6px;background:#c4c4c4"></div></div><div class="a" style="left:1066px;top:242px;width:5px;height:18px;overflow:hidden"><div class="t k" style="left:0.3px;top:3.2px;font-size:12.5px;color:#111">D</div><div class="a" style="left:4px;top:12px;width:1px;height:6px;background:#c4c4c4"></div></div><div class="a" style="left:1071px;top:242px;width:5px;height:18px;overflow:hidden"><div class="t k" style="left:0.3px;top:3.2px;font-size:12.5px;color:#111">D</div><div class="a" style="left:4px;top:12px;width:1px;height:6px;background:#c4c4c4"></div></div><div class="a" style="left:1076px;top:242px;width:5px;height:18px;overflow:hidden"><div class="t k" style="left:0.3px;top:3.2px;font-size:12.5px;color:#111">D</div><div class="a" style="left:4px;top:12px;width:1px;height:6px;background:#c4c4c4"></div></div><div class="a" style="left:1081px;top:242px;width:5px;height:18px;overflow:hidden"><div class="t k" style="left:0.3px;top:3.2px;font-size:12.5px;color:#111">D</div><div class="a" style="left:4px;top:12px;width:1px;height:6px;background:#c4c4c4"></div></div><div class="a" style="left:1086px;top:242px;width:5px;height:18px;overflow:hidden"><div class="t k" style="left:0.3px;top:3.2px;font-size:12.5px;color:#111">D</div><div class="a" style="left:4px;top:12px;width:1px;height:6px;background:#c4c4c4"></div></div><div class="a" style="left:1091px;top:242px;width:5px;height:18px;overflow:hidden"><div class="t k" style="left:0.3px;top:3.2px;font-size:12.5px;color:#111">D</div><div class="a" style="left:4px;top:12px;width:1px;height:6px;background:#c4c4c4"></div></div><div class="a" style="left:1096px;top:242px;width:5px;height:18px;overflow:hidden"><div class="t k" style="left:0.3px;top:3.2px;font-size:12.5px;color:#111">E</div><div class="a" style="left:4px;top:12px;width:1px;height:6px;background:#c4c4c4"></div></div><div class="a" style="left:1101px;top:242px;width:5px;height:18px;overflow:hidden"><div class="t k" style="left:0.3px;top:3.2px;font-size:12.5px;color:#111">E</div><div class="a" style="left:4px;top:12px;width:1px;height:6px;background:#c4c4c4"></div></div><div class="a" style="left:1106px;top:242px;width:5px;height:18px;overflow:hidden"><div class="t k" style="left:0.3px;top:3.2px;font-size:12.5px;color:#111">E</div><div class="a" style="left:4px;top:12px;width:1px;height:6px;background:#c4c4c4"></div></div><div class="a" style="left:1111px;top:242px;width:5px;height:18px;overflow:hidden"><div class="t k" style="left:0.3px;top:3.2px;font-size:12.5px;color:#111">E</div><div class="a" style="left:4px;top:12px;width:1px;height:6px;background:#c4c4c4"></div></div><div class="a" style="left:1116px;top:242px;width:5px;height:18px;overflow:hidden"><div class="t k" style="left:0.3px;top:3.2px;font-size:12.5px;color:#111">E</div><div class="a" style="left:4px;top:12px;width:1px;height:6px;background:#c4c4c4"></div></div><div class="a" style="left:1121px;top:242px;width:5px;height:18px;overflow:hidden"><div class="t k" style="left:0.3px;top:3.2px;font-size:12.5px;color:#111">E</div><div class="a" style="left:4px;top:12px;width:1px;height:6px;background:#c4c4c4"></div></div><div class="a" style="left:1126px;top:242px;width:5px;height:18px;overflow:hidden"><div class="t k" style="left:0.3px;top:3.2px;font-size:12.5px;color:#111">E</div><div class="a" style="left:4px;top:12px;width:1px;height:6px;background:#c4c4c4"></div></div><div class="a" style="left:1131px;top:242px;width:5px;height:18px;overflow:hidden"><div class="t k" style="left:0.3px;top:3.2px;font-size:12.5px;color:#111">E</div><div class="a" style="left:4px;top:12px;width:1px;height:6px;background:#c4c4c4"></div></div><div class="a" style="left:1136px;top:242px;width:5px;height:18px;overflow:hidden"><div class="t k" style="left:0.3px;top:3.2px;font-size:12.5px;color:#111">E</div><div class="a" style="left:4px;top:12px;width:1px;height:6px;background:#c4c4c4"></div></div><div class="a" style="left:1141px;top:242px;width:5px;height:18px;overflow:hidden"><div class="t k" style="left:0.3px;top:3.2px;font-size:12.5px;color:#111">E</div><div class="a" style="left:4px;top:12px;width:1px;height:6px;background:#c4c4c4"></div></div><div class="a" style="left:1146px;top:242px;width:5px;height:18px;overflow:hidden"><div class="t k" style="left:0.3px;top:3.2px;font-size:12.5px;color:#111">E</div><div class="a" style="left:4px;top:12px;width:1px;height:6px;background:#c4c4c4"></div></div><div class="a" style="left:1151px;top:242px;width:5px;height:18px;overflow:hidden"><div class="t k" style="left:0.3px;top:3.2px;font-size:12.5px;color:#111">E</div><div class="a" style="left:4px;top:12px;width:1px;height:6px;background:#c4c4c4"></div></div><div class="a" style="left:1156px;top:242px;width:5px;height:18px;overflow:hidden"><div class="t k" style="left:0.3px;top:3.2px;font-size:12.5px;color:#111">E</div><div class="a" style="left:4px;top:12px;width:1px;height:6px;background:#c4c4c4"></div></div><div class="a" style="left:1161px;top:242px;width:5px;height:18px;overflow:hidden"><div class="t k" style="left:0.3px;top:3.2px;font-size:12.5px;color:#111">E</div><div class="a" style="left:4px;top:12px;width:1px;height:6px;background:#c4c4c4"></div></div><div class="a" style="left:1166px;top:242px;width:5px;height:18px;overflow:hidden"><div class="t k" style="left:0.3px;top:3.2px;font-size:12.5px;color:#111">E</div><div class="a" style="left:4px;top:12px;width:1px;height:6px;background:#c4c4c4"></div></div><div class="a" style="left:1171px;top:242px;width:5px;height:18px;overflow:hidden"><div class="t k" style="left:0.3px;top:3.2px;font-size:12.5px;color:#111">E</div><div class="a" style="left:4px;top:12px;width:1px;height:6px;background:#c4c4c4"></div></div><div class="a" style="left:1176px;top:242px;width:5px;height:18px;overflow:hidden"><div class="t k" style="left:0.3px;top:3.2px;font-size:12.5px;color:#111">E</div><div class="a" style="left:4px;top:12px;width:1px;height:6px;background:#c4c4c4"></div></div><div class="a" style="left:1181px;top:242px;width:5px;height:18px;overflow:hidden"><div class="t k" style="left:0.3px;top:3.2px;font-size:12.5px;color:#111">E</div><div class="a" style="left:4px;top:12px;width:1px;height:6px;background:#c4c4c4"></div></div><div class="a" style="left:1186px;top:242px;width:5px;height:18px;overflow:hidden"><div class="t k" style="left:0.3px;top:3.2px;font-size:12.5px;color:#111">E</div><div class="a" style="left:4px;top:12px;width:1px;height:6px;background:#c4c4c4"></div></div><div class="a" style="left:1191px;top:242px;width:5px;height:18px;overflow:hidden"><div class="t k" style="left:0.3px;top:3.2px;font-size:12.5px;color:#111">E</div><div class="a" style="left:4px;top:12px;width:1px;height:6px;background:#c4c4c4"></div></div><div class="a" style="left:1196px;top:242px;width:5px;height:18px;overflow:hidden"><div class="t k" style="left:0.3px;top:3.2px;font-size:12.5px;color:#111">E</div><div class="a" style="left:4px;top:12px;width:1px;height:6px;background:#c4c4c4"></div></div><div class="a" style="left:1201px;top:242px;width:5px;height:18px;overflow:hidden"><div class="t k" style="left:0.3px;top:3.2px;font-size:12.5px;color:#111">E</div><div class="a" style="left:4px;top:12px;width:1px;height:6px;background:#c4c4c4"></div></div><div class="a" style="left:1206px;top:242px;width:5px;height:18px;overflow:hidden"><div class="t k" style="left:0.3px;top:3.2px;font-size:12.5px;color:#111">E</div><div class="a" style="left:4px;top:12px;width:1px;height:6px;background:#c4c4c4"></div></div><div class="a" style="left:1211px;top:242px;width:5px;height:18px;overflow:hidden"><div class="t k" style="left:0.3px;top:3.2px;font-size:12.5px;color:#111">E</div><div class="a" style="left:4px;top:12px;width:1px;height:6px;background:#c4c4c4"></div></div><div class="a" style="left:1216px;top:242px;width:5px;height:18px;overflow:hidden"><div class="t k" style="left:0.3px;top:3.2px;font-size:12.5px;color:#111">E</div><div class="a" style="left:4px;top:12px;width:1px;height:6px;background:#c4c4c4"></div></div><div class="a" style="left:1221px;top:242px;width:5px;height:18px;overflow:hidden"><div class="t k" style="left:0.3px;top:3.2px;font-size:12.5px;color:#111">E</div><div class="a" style="left:4px;top:12px;width:1px;height:6px;background:#c4c4c4"></div></div><div class="a" style="left:1226px;top:242px;width:5px;height:18px;overflow:hidden"><div class="t k" style="left:0.3px;top:3.2px;font-size:12.5px;color:#111">F</div><div class="a" style="left:4px;top:12px;width:1px;height:6px;background:#c4c4c4"></div></div><div class="a" style="left:1231px;top:242px;width:5px;height:18px;overflow:hidden"><div class="t k" style="left:0.3px;top:3.2px;font-size:12.5px;color:#111">F</div><div class="a" style="left:4px;top:12px;width:1px;height:6px;background:#c4c4c4"></div></div><div class="a" style="left:1236px;top:242px;width:5px;height:18px;overflow:hidden"><div class="t k" style="left:0.3px;top:3.2px;font-size:12.5px;color:#111">F</div><div class="a" style="left:4px;top:12px;width:1px;height:6px;background:#c4c4c4"></div></div><div class="a" style="left:1241px;top:242px;width:5px;height:18px;overflow:hidden"><div class="t k" style="left:0.3px;top:3.2px;font-size:12.5px;color:#111">F</div><div class="a" style="left:4px;top:12px;width:1px;height:6px;background:#c4c4c4"></div></div><div class="a" style="left:1246px;top:242px;width:5px;height:18px;overflow:hidden"><div class="t k" style="left:0.3px;top:3.2px;font-size:12.5px;color:#111">F</div><div class="a" style="left:4px;top:12px;width:1px;height:6px;background:#c4c4c4"></div></div><div class="a" style="left:1251px;top:242px;width:5px;height:18px;overflow:hidden"><div class="t k" style="left:0.3px;top:3.2px;font-size:12.5px;color:#111">F</div><div class="a" style="left:4px;top:12px;width:1px;height:6px;background:#c4c4c4"></div></div><div class="a" style="left:1256px;top:242px;width:5px;height:18px;overflow:hidden"><div class="t k" style="left:0.3px;top:3.2px;font-size:12.5px;color:#111">F</div><div class="a" style="left:4px;top:12px;width:1px;height:6px;background:#c4c4c4"></div></div><div class="a" style="left:1261px;top:242px;width:5px;height:18px;overflow:hidden"><div class="t k" style="left:0.3px;top:3.2px;font-size:12.5px;color:#111">F</div><div class="a" style="left:4px;top:12px;width:1px;height:6px;background:#c4c4c4"></div></div><div class="a" style="left:1266px;top:242px;width:5px;height:18px;overflow:hidden"><div class="t k" style="left:0.3px;top:3.2px;font-size:12.5px;color:#111">F</div><div class="a" style="left:4px;top:12px;width:1px;height:6px;background:#c4c4c4"></div></div><div class="a" style="left:1271px;top:242px;width:5px;height:18px;overflow:hidden"><div class="t k" style="left:0.3px;top:3.2px;font-size:12.5px;color:#111">F</div><div class="a" style="left:4px;top:12px;width:1px;height:6px;background:#c4c4c4"></div></div><div class="a" style="left:1276px;top:242px;width:5px;height:18px;overflow:hidden"><div class="t k" style="left:0.3px;top:3.2px;font-size:12.5px;color:#111">F</div><div class="a" style="left:4px;top:12px;width:1px;height:6px;background:#c4c4c4"></div></div><div class="a" style="left:1281px;top:242px;width:5px;height:18px;overflow:hidden"><div class="t k" style="left:0.3px;top:3.2px;font-size:12.5px;color:#111">F</div><div class="a" style="left:4px;top:12px;width:1px;height:6px;background:#c4c4c4"></div></div><div class="a" style="left:1286px;top:242px;width:5px;height:18px;overflow:hidden"><div class="t k" style="left:0.3px;top:3.2px;font-size:12.5px;color:#111">F</div><div class="a" style="left:4px;top:12px;width:1px;height:6px;background:#c4c4c4"></div></div><div class="a" style="left:1291px;top:242px;width:5px;height:18px;overflow:hidden"><div class="t k" style="left:0.3px;top:3.2px;font-size:12.5px;color:#111">F</div><div class="a" style="left:4px;top:12px;width:1px;height:6px;background:#c4c4c4"></div></div><div class="a" style="left:1296px;top:242px;width:5px;height:18px;overflow:hidden"><div class="t k" style="left:0.3px;top:3.2px;font-size:12.5px;color:#111">F</div><div class="a" style="left:4px;top:12px;width:1px;height:6px;background:#c4c4c4"></div></div><div class="a" style="left:1301px;top:242px;width:5px;height:18px;overflow:hidden"><div class="t k" style="left:0.3px;top:3.2px;font-size:12.5px;color:#111">F</div><div class="a" style="left:4px;top:12px;width:1px;height:6px;background:#c4c4c4"></div></div><div class="a" style="left:1306px;top:242px;width:5px;height:18px;overflow:hidden"><div class="t k" style="left:0.3px;top:3.2px;font-size:12.5px;color:#111">F</div><div class="a" style="left:4px;top:12px;width:1px;height:6px;background:#c4c4c4"></div></div><div class="a" style="left:1311px;top:242px;width:5px;height:18px;overflow:hidden"><div class="t k" style="left:0.3px;top:3.2px;font-size:12.5px;color:#111">F</div><div class="a" style="left:4px;top:12px;width:1px;height:6px;background:#c4c4c4"></div></div><div class="a" style="left:1316px;top:242px;width:5px;height:18px;overflow:hidden"><div class="t k" style="left:0.3px;top:3.2px;font-size:12.5px;color:#111">F</div><div class="a" style="left:4px;top:12px;width:1px;height:6px;background:#c4c4c4"></div></div><div class="a" style="left:1321px;top:242px;width:5px;height:18px;overflow:hidden"><div class="t k" style="left:0.3px;top:3.2px;font-size:12.5px;color:#111">F</div><div class="a" style="left:4px;top:12px;width:1px;height:6px;background:#c4c4c4"></div></div><div class="a" style="left:1326px;top:242px;width:5px;height:18px;overflow:hidden"><div class="t k" style="left:0.3px;top:3.2px;font-size:12.5px;color:#111">F</div><div class="a" style="left:4px;top:12px;width:1px;height:6px;background:#c4c4c4"></div></div><div class="a" style="left:1331px;top:242px;width:5px;height:18px;overflow:hidden"><div class="t k" style="left:0.3px;top:3.2px;font-size:12.5px;color:#111">F</div><div class="a" style="left:4px;top:12px;width:1px;height:6px;background:#c4c4c4"></div></div><div class="a" style="left:1336px;top:242px;width:5px;height:18px;overflow:hidden"><div class="t k" style="left:0.3px;top:3.2px;font-size:12.5px;color:#111">F</div><div class="a" style="left:4px;top:12px;width:1px;height:6px;background:#c4c4c4"></div></div><div class="a" style="left:1341px;top:242px;width:5px;height:18px;overflow:hidden"><div class="t k" style="left:0.3px;top:3.2px;font-size:12.5px;color:#111">F</div><div class="a" style="left:4px;top:12px;width:1px;height:6px;background:#c4c4c4"></div></div><div class="a" style="left:1346px;top:242px;width:5px;height:18px;overflow:hidden"><div class="t k" style="left:0.3px;top:3.2px;font-size:12.5px;color:#111">F</div><div class="a" style="left:4px;top:12px;width:1px;height:6px;background:#c4c4c4"></div></div><div class="a" style="left:1351px;top:242px;width:5px;height:18px;overflow:hidden"><div class="t k" style="left:0.3px;top:3.2px;font-size:12.5px;color:#111">F</div><div class="a" style="left:4px;top:12px;width:1px;height:6px;background:#c4c4c4"></div></div><div class="a" style="left:1356px;top:242px;width:5px;height:18px;overflow:hidden"><div class="t k" style="left:0.3px;top:3.2px;font-size:12.5px;color:#111">G</div><div class="a" style="left:4px;top:12px;width:1px;height:6px;background:#c4c4c4"></div></div><div class="a" style="left:1361px;top:242px;width:5px;height:18px;overflow:hidden"><div class="t k" style="left:0.3px;top:3.2px;font-size:12.5px;color:#111">G</div><div class="a" style="left:4px;top:12px;width:1px;height:6px;background:#c4c4c4"></div></div><div class="a" style="left:1366px;top:242px;width:5px;height:18px;overflow:hidden"><div class="t k" style="left:0.3px;top:3.2px;font-size:12.5px;color:#111">G</div><div class="a" style="left:4px;top:12px;width:1px;height:6px;background:#c4c4c4"></div></div><div class="a" style="left:1371px;top:242px;width:5px;height:18px;overflow:hidden"><div class="t k" style="left:0.3px;top:3.2px;font-size:12.5px;color:#111">G</div><div class="a" style="left:4px;top:12px;width:1px;height:6px;background:#c4c4c4"></div></div><div class="a" style="left:1376px;top:242px;width:5px;height:18px;overflow:hidden"><div class="t k" style="left:0.3px;top:3.2px;font-size:12.5px;color:#111">G</div><div class="a" style="left:4px;top:12px;width:1px;height:6px;background:#c4c4c4"></div></div><div class="a" style="left:1381px;top:242px;width:5px;height:18px;overflow:hidden"><div class="t k" style="left:0.3px;top:3.2px;font-size:12.5px;color:#111">G</div><div class="a" style="left:4px;top:12px;width:1px;height:6px;background:#c4c4c4"></div></div><div class="a" style="left:1386px;top:242px;width:5px;height:18px;overflow:hidden"><div class="t k" style="left:0.3px;top:3.2px;font-size:12.5px;color:#111">G</div><div class="a" style="left:4px;top:12px;width:1px;height:6px;background:#c4c4c4"></div></div><div class="a" style="left:1391px;top:242px;width:5px;height:18px;overflow:hidden"><div class="t k" style="left:0.3px;top:3.2px;font-size:12.5px;color:#111">G</div><div class="a" style="left:4px;top:12px;width:1px;height:6px;background:#c4c4c4"></div></div><div class="a" style="left:1396px;top:242px;width:5px;height:18px;overflow:hidden"><div class="t k" style="left:0.3px;top:3.2px;font-size:12.5px;color:#111">G</div><div class="a" style="left:4px;top:12px;width:1px;height:6px;background:#c4c4c4"></div></div><div class="a" style="left:1401px;top:242px;width:5px;height:18px;overflow:hidden"><div class="t k" style="left:0.3px;top:3.2px;font-size:12.5px;color:#111">G</div><div class="a" style="left:4px;top:12px;width:1px;height:6px;background:#c4c4c4"></div></div><div class="a" style="left:1406px;top:242px;width:5px;height:18px;overflow:hidden"><div class="t k" style="left:0.3px;top:3.2px;font-size:12.5px;color:#111">G</div><div class="a" style="left:4px;top:12px;width:1px;height:6px;background:#c4c4c4"></div></div><div class="a" style="left:1411px;top:242px;width:5px;height:18px;overflow:hidden"><div class="t k" style="left:0.3px;top:3.2px;font-size:12.5px;color:#111">G</div><div class="a" style="left:4px;top:12px;width:1px;height:6px;background:#c4c4c4"></div></div><div class="a" style="left:1416px;top:242px;width:5px;height:18px;overflow:hidden"><div class="t k" style="left:0.3px;top:3.2px;font-size:12.5px;color:#111">G</div><div class="a" style="left:4px;top:12px;width:1px;height:6px;background:#c4c4c4"></div></div><div class="a" style="left:1421px;top:242px;width:5px;height:18px;overflow:hidden"><div class="t k" style="left:0.3px;top:3.2px;font-size:12.5px;color:#111">G</div><div class="a" style="left:4px;top:12px;width:1px;height:6px;background:#c4c4c4"></div></div><div class="a" style="left:1426px;top:242px;width:5px;height:18px;overflow:hidden"><div class="t k" style="left:0.3px;top:3.2px;font-size:12.5px;color:#111">G</div><div class="a" style="left:4px;top:12px;width:1px;height:6px;background:#c4c4c4"></div></div><div class="a" style="left:1431px;top:242px;width:5px;height:18px;overflow:hidden"><div class="t k" style="left:0.3px;top:3.2px;font-size:12.5px;color:#111">G</div><div class="a" style="left:4px;top:12px;width:1px;height:6px;background:#c4c4c4"></div></div><div class="a" style="left:1436px;top:242px;width:5px;height:18px;overflow:hidden"><div class="t k" style="left:0.3px;top:3.2px;font-size:12.5px;color:#111">G</div><div class="a" style="left:4px;top:12px;width:1px;height:6px;background:#c4c4c4"></div></div><div class="a" style="left:1441px;top:242px;width:5px;height:18px;overflow:hidden"><div class="t k" style="left:0.3px;top:3.2px;font-size:12.5px;color:#111">G</div><div class="a" style="left:4px;top:12px;width:1px;height:6px;background:#c4c4c4"></div></div><div class="a" style="left:1446px;top:242px;width:5px;height:18px;overflow:hidden"><div class="t k" style="left:0.3px;top:3.2px;font-size:12.5px;color:#111">G</div><div class="a" style="left:4px;top:12px;width:1px;height:6px;background:#c4c4c4"></div></div><div class="a" style="left:1451px;top:242px;width:5px;height:18px;overflow:hidden"><div class="t k" style="left:0.3px;top:3.2px;font-size:12.5px;color:#111">G</div><div class="a" style="left:4px;top:12px;width:1px;height:6px;background:#c4c4c4"></div></div><div class="a" style="left:1456px;top:242px;width:5px;height:18px;overflow:hidden"><div class="t k" style="left:0.3px;top:3.2px;font-size:12.5px;color:#111">G</div><div class="a" style="left:4px;top:12px;width:1px;height:6px;background:#c4c4c4"></div></div><div class="a" style="left:1461px;top:242px;width:5px;height:18px;overflow:hidden"><div class="t k" style="left:0.3px;top:3.2px;font-size:12.5px;color:#111">G</div><div class="a" style="left:4px;top:12px;width:1px;height:6px;background:#c4c4c4"></div></div><div class="a" style="left:1466px;top:242px;width:5px;height:18px;overflow:hidden"><div class="t k" style="left:0.3px;top:3.2px;font-size:12.5px;color:#111">G</div><div class="a" style="left:4px;top:12px;width:1px;height:6px;background:#c4c4c4"></div></div><div class="a" style="left:1471px;top:242px;width:5px;height:18px;overflow:hidden"><div class="t k" style="left:0.3px;top:3.2px;font-size:12.5px;color:#111">G</div><div class="a" style="left:4px;top:12px;width:1px;height:6px;background:#c4c4c4"></div></div><div class="a" style="left:1476px;top:242px;width:5px;height:18px;overflow:hidden"><div class="t k" style="left:0.3px;top:3.2px;font-size:12.5px;color:#111">G</div><div class="a" style="left:4px;top:12px;width:1px;height:6px;background:#c4c4c4"></div></div><div class="a" style="left:1481px;top:242px;width:5px;height:18px;overflow:hidden"><div class="t k" style="left:0.3px;top:3.2px;font-size:12.5px;color:#111">G</div><div class="a" style="left:4px;top:12px;width:1px;height:6px;background:#c4c4c4"></div></div><div class="a" style="left:1486px;top:242px;width:5px;height:18px;overflow:hidden"><div class="t k" style="left:0.3px;top:3.2px;font-size:12.5px;color:#111">H</div><div class="a" style="left:4px;top:12px;width:1px;height:6px;background:#c4c4c4"></div></div><div class="a" style="left:1491px;top:242px;width:5px;height:18px;overflow:hidden"><div class="t k" style="left:0.3px;top:3.2px;font-size:12.5px;color:#111">H</div><div class="a" style="left:4px;top:12px;width:1px;height:6px;background:#c4c4c4"></div></div><div class="a" style="left:1496px;top:242px;width:5px;height:18px;overflow:hidden"><div class="t k" style="left:0.3px;top:3.2px;font-size:12.5px;color:#111">H</div><div class="a" style="left:4px;top:12px;width:1px;height:6px;background:#c4c4c4"></div></div><div class="a" style="left:1501px;top:242px;width:5px;height:18px;overflow:hidden"><div class="t k" style="left:0.3px;top:3.2px;font-size:12.5px;color:#111">H</div><div class="a" style="left:4px;top:12px;width:1px;height:6px;background:#c4c4c4"></div></div><div class="a" style="left:1506px;top:242px;width:5px;height:18px;overflow:hidden"><div class="t k" style="left:0.3px;top:3.2px;font-size:12.5px;color:#111">H</div><div class="a" style="left:4px;top:12px;width:1px;height:6px;background:#c4c4c4"></div></div><div class="a" style="left:1511px;top:242px;width:5px;height:18px;overflow:hidden"><div class="t k" style="left:0.3px;top:3.2px;font-size:12.5px;color:#111">H</div><div class="a" style="left:4px;top:12px;width:1px;height:6px;background:#c4c4c4"></div></div><div class="a" style="left:1516px;top:242px;width:5px;height:18px;overflow:hidden"><div class="t k" style="left:0.3px;top:3.2px;font-size:12.5px;color:#111">H</div><div class="a" style="left:4px;top:12px;width:1px;height:6px;background:#c4c4c4"></div></div><div class="a" style="left:1521px;top:242px;width:5px;height:18px;overflow:hidden"><div class="t k" style="left:0.3px;top:3.2px;font-size:12.5px;color:#111">H</div><div class="a" style="left:4px;top:12px;width:1px;height:6px;background:#c4c4c4"></div></div><div class="a" style="left:1526px;top:242px;width:5px;height:18px;overflow:hidden"><div class="t k" style="left:0.3px;top:3.2px;font-size:12.5px;color:#111">H</div><div class="a" style="left:4px;top:12px;width:1px;height:6px;background:#c4c4c4"></div></div><div class="a" style="left:1531px;top:242px;width:5px;height:18px;overflow:hidden"><div class="t k" style="left:0.3px;top:3.2px;font-size:12.5px;color:#111">H</div><div class="a" style="left:4px;top:12px;width:1px;height:6px;background:#c4c4c4"></div></div><div class="a" style="left:1536px;top:242px;width:5px;height:18px;overflow:hidden"><div class="t k" style="left:0.3px;top:3.2px;font-size:12.5px;color:#111">H</div><div class="a" style="left:4px;top:12px;width:1px;height:6px;background:#c4c4c4"></div></div><div class="a" style="left:1541px;top:242px;width:5px;height:18px;overflow:hidden"><div class="t k" style="left:0.3px;top:3.2px;font-size:12.5px;color:#111">H</div><div class="a" style="left:4px;top:12px;width:1px;height:6px;background:#c4c4c4"></div></div><div class="a" style="left:1546px;top:242px;width:5px;height:18px;overflow:hidden"><div class="t k" style="left:0.3px;top:3.2px;font-size:12.5px;color:#111">H</div><div class="a" style="left:4px;top:12px;width:1px;height:6px;background:#c4c4c4"></div></div><div class="a" style="left:1551px;top:242px;width:5px;height:18px;overflow:hidden"><div class="t k" style="left:0.3px;top:3.2px;font-size:12.5px;color:#111">H</div><div class="a" style="left:4px;top:12px;width:1px;height:6px;background:#c4c4c4"></div></div><div class="a" style="left:1556px;top:242px;width:5px;height:18px;overflow:hidden"><div class="t k" style="left:0.3px;top:3.2px;font-size:12.5px;color:#111">H</div><div class="a" style="left:4px;top:12px;width:1px;height:6px;background:#c4c4c4"></div></div><div class="a" style="left:1561px;top:242px;width:5px;height:18px;overflow:hidden"><div class="t k" style="left:0.3px;top:3.2px;font-size:12.5px;color:#111">H</div><div class="a" style="left:4px;top:12px;width:1px;height:6px;background:#c4c4c4"></div></div><div class="a" style="left:1566px;top:242px;width:5px;height:18px;overflow:hidden"><div class="t k" style="left:0.3px;top:3.2px;font-size:12.5px;color:#111">H</div><div class="a" style="left:4px;top:12px;width:1px;height:6px;background:#c4c4c4"></div></div><div class="a" style="left:1571px;top:242px;width:5px;height:18px;overflow:hidden"><div class="t k" style="left:0.3px;top:3.2px;font-size:12.5px;color:#111">H</div><div class="a" style="left:4px;top:12px;width:1px;height:6px;background:#c4c4c4"></div></div><div class="a" style="left:1576px;top:242px;width:5px;height:18px;overflow:hidden"><div class="t k" style="left:0.3px;top:3.2px;font-size:12.5px;color:#111">H</div><div class="a" style="left:4px;top:12px;width:1px;height:6px;background:#c4c4c4"></div></div><div class="a" style="left:1581px;top:242px;width:5px;height:18px;overflow:hidden"><div class="t k" style="left:0.3px;top:3.2px;font-size:12.5px;color:#111">H</div><div class="a" style="left:4px;top:12px;width:1px;height:6px;background:#c4c4c4"></div></div><div class="a" style="left:1586px;top:242px;width:5px;height:18px;overflow:hidden"><div class="t k" style="left:0.3px;top:3.2px;font-size:12.5px;color:#111">H</div><div class="a" style="left:4px;top:12px;width:1px;height:6px;background:#c4c4c4"></div></div><div class="a" style="left:1591px;top:242px;width:5px;height:18px;overflow:hidden"><div class="t k" style="left:0.3px;top:3.2px;font-size:12.5px;color:#111">H</div><div class="a" style="left:4px;top:12px;width:1px;height:6px;background:#c4c4c4"></div></div>
<div class="a" style="left:0px;top:260px;width:26px;height:676px;background:#e6e6e6;"></div>
<div class="a" style="left:25px;top:260px;width:1px;height:676px;background:#a8a8a8;"></div>
<div class="a" style="left:0px;top:281px;width:26px;height:1px;background:#c8c8c8;"></div>
<div class="t" style="left:10.17px;top:266.49px;font-size:13px;color:#222;transform:scaleX(0.9200);">2</div>
<div class="a" style="left:0px;top:330px;width:26px;height:1px;background:#c8c8c8;"></div>
<div class="t" style="left:10.21px;top:315.49px;font-size:13px;color:#222;transform:scaleX(0.9200);">4</div>
<div class="a" style="left:0px;top:360px;width:26px;height:1px;background:#c8c8c8;"></div>
<div class="t" style="left:10.17px;top:343.99px;font-size:13px;color:#222;transform:scaleX(0.9200);">7</div>
<div class="a" style="left:0px;top:392px;width:26px;height:1px;background:#c8c8c8;"></div>
<div class="t" style="left:6.66px;top:375.99px;font-size:13px;color:#222;transform:scaleX(0.9200);">13</div>
<div class="a" style="left:0px;top:414px;width:26px;height:1px;background:#c8c8c8;"></div>
<div class="t" style="left:6.57px;top:397.99px;font-size:13px;color:#222;transform:scaleX(0.9200);">14</div>
<div class="a" style="left:0px;top:437px;width:26px;height:1px;background:#c8c8c8;"></div>
<div class="t" style="left:6.64px;top:420.99px;font-size:13px;color:#222;transform:scaleX(0.9200);">15</div>
<div class="a" style="left:0px;top:439px;width:25.5px;height:24px;background:#d9d9d9;"></div>
<div class="a" style="left:24px;top:439px;width:2px;height:24px;background:#217346;"></div>
<div class="a" style="left:0px;top:462px;width:26px;height:1px;background:#c8c8c8;"></div>
<div class="t" style="left:6.69px;top:445.99px;font-size:13px;color:#3b3b9e;transform:scaleX(0.9200);">17</div>
<div class="a" style="left:0px;top:486px;width:26px;height:1px;background:#c8c8c8;"></div>
<div class="t" style="left:6.65px;top:469.99px;font-size:13px;color:#3b3b9e;transform:scaleX(0.9200);">18</div>
<div class="a" style="left:0px;top:510px;width:26px;height:1px;background:#c8c8c8;"></div>
<div class="t" style="left:6.68px;top:493.99px;font-size:13px;color:#3b3b9e;transform:scaleX(0.9200);">19</div>
<div class="a" style="left:0px;top:534px;width:26px;height:1px;background:#c8c8c8;"></div>
<div class="t" style="left:6.78px;top:517.99px;font-size:13px;color:#3b3b9e;transform:scaleX(0.9200);">20</div>
<div class="a" style="left:0px;top:558px;width:26px;height:1px;background:#c8c8c8;"></div>
<div class="t" style="left:6.84px;top:541.99px;font-size:13px;color:#3b3b9e;transform:scaleX(0.9200);">21</div>
<div class="a" style="left:0px;top:582px;width:26px;height:1px;background:#c8c8c8;"></div>
<div class="t" style="left:6.85px;top:565.99px;font-size:13px;color:#3b3b9e;transform:scaleX(0.9200);">22</div>
<div class="a" style="left:0px;top:606px;width:26px;height:1px;background:#c8c8c8;"></div>
<div class="t" style="left:6.81px;top:589.99px;font-size:13px;color:#3b3b9e;transform:scaleX(0.9200);">23</div>
<div class="a" style="left:0px;top:630px;width:26px;height:1px;background:#c8c8c8;"></div>
<div class="t" style="left:6.80px;top:613.99px;font-size:13px;color:#3b3b9e;transform:scaleX(0.9200);">25</div>
<div class="a" style="left:0px;top:654px;width:26px;height:1px;background:#c8c8c8;"></div>
<div class="t" style="left:6.81px;top:637.99px;font-size:13px;color:#3b3b9e;transform:scaleX(0.9200);">26</div>
<div class="a" style="left:0px;top:678px;width:26px;height:1px;background:#c8c8c8;"></div>
<div class="t" style="left:6.85px;top:661.99px;font-size:13px;color:#3b3b9e;transform:scaleX(0.9200);">27</div>
<div class="a" style="left:0px;top:702px;width:26px;height:1px;background:#c8c8c8;"></div>
<div class="t" style="left:6.81px;top:685.99px;font-size:13px;color:#3b3b9e;transform:scaleX(0.9200);">28</div>
<div class="a" style="left:0px;top:726px;width:26px;height:1px;background:#c8c8c8;"></div>
<div class="t" style="left:6.83px;top:709.99px;font-size:13px;color:#3b3b9e;transform:scaleX(0.9200);">29</div>
<div class="a" style="left:0px;top:750px;width:26px;height:1px;background:#c8c8c8;"></div>
<div class="t" style="left:6.85px;top:733.99px;font-size:13px;color:#3b3b9e;transform:scaleX(0.9200);">30</div>
<div class="a" style="left:0px;top:774px;width:26px;height:1px;background:#c8c8c8;"></div>
<div class="t" style="left:6.91px;top:757.99px;font-size:13px;color:#3b3b9e;transform:scaleX(0.9200);">31</div>
<div class="a" style="left:0px;top:798px;width:26px;height:1px;background:#c8c8c8;"></div>
<div class="t" style="left:6.88px;top:781.99px;font-size:13px;color:#3b3b9e;transform:scaleX(0.9200);">33</div>
<div class="a" style="left:0px;top:822px;width:26px;height:1px;background:#c8c8c8;"></div>
<div class="t" style="left:6.80px;top:805.99px;font-size:13px;color:#3b3b9e;transform:scaleX(0.9200);">34</div>
<div class="a" style="left:0px;top:845px;width:26px;height:1px;background:#c8c8c8;"></div>
<div class="t" style="left:6.87px;top:828.99px;font-size:13px;color:#3b3b9e;transform:scaleX(0.9200);">35</div>
<div class="a" style="left:0px;top:868px;width:26px;height:1px;background:#c8c8c8;"></div>
<div class="t" style="left:6.88px;top:851.99px;font-size:13px;color:#3b3b9e;transform:scaleX(0.9200);">36</div>
<div class="a" style="left:0px;top:891px;width:26px;height:1px;background:#c8c8c8;"></div>
<div class="t" style="left:6.92px;top:874.99px;font-size:13px;color:#3b3b9e;transform:scaleX(0.9200);">37</div>
<div class="a" style="left:0px;top:914px;width:26px;height:1px;background:#c8c8c8;"></div>
<div class="t" style="left:6.88px;top:897.99px;font-size:13px;color:#3b3b9e;transform:scaleX(0.9200);">38</div>
<div class="a" style="left:0px;top:937px;width:26px;height:1px;background:#c8c8c8;"></div>
<div class="t" style="left:6.90px;top:920.99px;font-size:13px;color:#3b3b9e;transform:scaleX(0.9200);">39</div>
<div class="a" style="left:0px;top:282px;width:26px;height:1px;background:#9a9a9a;"></div>
<div class="a" style="left:0px;top:284px;width:26px;height:1px;background:#9a9a9a;"></div>
<div class="a" style="left:0px;top:331px;width:26px;height:1px;background:#9a9a9a;"></div>
<div class="a" style="left:0px;top:335px;width:26px;height:1px;background:#9a9a9a;"></div>
<div class="a" style="left:0px;top:361px;width:26px;height:1px;background:#9a9a9a;"></div>
<div class="a" style="left:0px;top:365px;width:26px;height:1px;background:#9a9a9a;"></div>
<div class="a" style="left:0px;top:438px;width:26px;height:1px;background:#9a9a9a;"></div>
<div class="a" style="left:0px;top:438px;width:26px;height:1px;background:#9a9a9a;"></div>
<div class="a" style="left:0px;top:607px;width:26px;height:1px;background:#9a9a9a;"></div>
<div class="a" style="left:0px;top:607px;width:26px;height:1px;background:#9a9a9a;"></div>
<div class="a" style="left:0px;top:775px;width:26px;height:1px;background:#9a9a9a;"></div>
<div class="a" style="left:0px;top:776px;width:26px;height:1px;background:#9a9a9a;"></div>
<svg style="left:0;top:0" width="0" height="0"><defs><radialGradient id="ckg" cx="50%" cy="50%" r="50%"><stop offset="0" stop-color="#5ea58c"/><stop offset="1" stop-color="#2f6e57"/></radialGradient></defs></svg>
<div class="t" style="left:29.65px;top:263.00px;font-size:23.5px;color:#9fcf45;transform:scaleX(1.0609);">Projekt:</div>
<div class="t" style="left:31.62px;top:287.75px;font-size:44px;font-weight:bold;color:#8fcf1c;transform:scaleX(0.9775);">MailBox</div>
<div class="t k" style="left:27.63px;top:343.02px;font-size:13.8px;font-weight:bold;color:#000;transform:scaleX(1.0561);">Projektleitung: Simon Weber</div>
<div class="t k" style="left:433.93px;top:343.02px;font-size:13.8px;font-weight:bold;color:#000;transform:scaleX(1.0498);">Projektstart [PS] :</div>
<div class="t" style="left:560.04px;top:343.02px;font-size:13.8px;font-weight:bold;color:#9fcf45;transform:scaleX(1.0339);">02.06.14</div>
<div class="a" style="left:26px;top:364px;width:1566px;height:73px;background:#9cd60b;"></div>
<div class="a" style="left:26px;top:437px;width:1566px;height:1px;background:#f4f9e8;"></div>
<div class="a" style="left:26px;top:438px;width:1566px;height:1px;background:#c4c4c4;"></div>
<div class="t k" style="left:37.68px;top:397.99px;font-size:13px;font-weight:bold;color:#eef7c0;transform:scaleX(1.0556);">Nr.</div>
<div class="t k" style="left:71.77px;top:397.99px;font-size:13px;font-weight:bold;color:#eef7c0;transform:scaleX(1.0052);">Aufgabe</div>
<div class="t k" style="left:388.46px;top:397.59px;font-size:13px;font-weight:bold;color:#eef7c0;transform:scaleX(1.0391);">Aufwand</div>
<div class="t k" style="left:499.24px;top:397.59px;font-size:13px;font-weight:bold;color:#eef7c0;transform:scaleX(0.9696);">Start</div>
<div class="t k" style="left:578.72px;top:397.59px;font-size:13px;font-weight:bold;color:#eef7c0;transform:scaleX(1.0117);">Dauer</div>
<div class="a" style="left:53px;top:421px;width:15px;height:15px;background:#f4f4f4;border:1px solid #d4d4d4;"></div>
<div class="a" style="left:369.5px;top:421px;width:15px;height:15px;background:#f4f4f4;border:1px solid #d4d4d4;"></div>
<div class="a" style="left:455px;top:421px;width:15px;height:15px;background:#f4f4f4;border:1px solid #d4d4d4;"></div>
<div class="a" style="left:541px;top:421px;width:15px;height:15px;background:#f4f4f4;border:1px solid #d4d4d4;"></div>
<svg style="left:53px;top:421px" width="15" height="15"><path d="M5 3h8l-3 4v5l-2 -1v-4z" fill="#555"/><path d="M2 9h3l-1.5 2z" fill="#555"/></svg>
<svg style="left:369.5px;top:421px" width="15" height="15"><path d="M4 6h7l-3.5 4z" fill="#555"/></svg>
<svg style="left:455px;top:421px" width="15" height="15"><path d="M4 6h7l-3.5 4z" fill="#555"/></svg>
<svg style="left:541px;top:421px" width="15" height="15"><path d="M4 6h7l-3.5 4z" fill="#555"/></svg>
<div class="a" style="left:26px;top:439px;width:1566px;height:22px;background:#c0c0c0;"></div>
<div class="a" style="left:26px;top:464px;width:1566px;height:21px;background:#f8f8f8;"></div>
<div class="a" style="left:26px;top:512px;width:1566px;height:21px;background:#f8f8f8;"></div>
<div class="a" style="left:26px;top:560px;width:1566px;height:21px;background:#f8f8f8;"></div>
<div class="a" style="left:26px;top:608px;width:1566px;height:21px;background:#c0c0c0;"></div>
<div class="a" style="left:26px;top:632px;width:1566px;height:21px;background:#f8f8f8;"></div>
<div class="a" style="left:26px;top:680px;width:1566px;height:21px;background:#f8f8f8;"></div>
<div class="a" style="left:26px;top:728px;width:1566px;height:21px;background:#f8f8f8;"></div>
<div class="a" style="left:26px;top:777px;width:1566px;height:20px;background:#c0c0c0;"></div>
<div class="a" style="left:26px;top:800px;width:1566px;height:21px;background:#f8f8f8;"></div>
<div class="a" style="left:26px;top:847px;width:1566px;height:20px;background:#f8f8f8;"></div>
<div class="a" style="left:26px;top:893px;width:1566px;height:20px;background:#f8f8f8;"></div>
<div class="a" style="left:850px;top:440px;width:10px;height:22px;background:#e9e9e9"></div><div class="a" style="left:885px;top:440px;width:10px;height:22px;background:#e9e9e9"></div><div class="a" style="left:920px;top:440px;width:10px;height:22px;background:#e9e9e9"></div><div class="a" style="left:955px;top:440px;width:10px;height:22px;background:#e9e9e9"></div><div class="a" style="left:990px;top:440px;width:10px;height:22px;background:#e9e9e9"></div><div class="a" style="left:1025px;top:440px;width:10px;height:22px;background:#e9e9e9"></div><div class="a" style="left:1060px;top:440px;width:10px;height:22px;background:#e9e9e9"></div><div class="a" style="left:1095px;top:440px;width:10px;height:22px;background:#e9e9e9"></div><div class="a" style="left:1130px;top:440px;width:10px;height:22px;background:#e9e9e9"></div><div class="a" style="left:1165px;top:440px;width:10px;height:22px;background:#e9e9e9"></div><div class="a" style="left:1200px;top:440px;width:10px;height:22px;background:#e9e9e9"></div><div class="a" style="left:1235px;top:440px;width:10px;height:22px;background:#e9e9e9"></div><div class="a" style="left:1270px;top:440px;width:10px;height:22px;background:#e9e9e9"></div><div class="a" style="left:1305px;top:440px;width:10px;height:22px;background:#e9e9e9"></div><div class="a" style="left:1340px;top:440px;width:10px;height:22px;background:#e9e9e9"></div><div class="a" style="left:1375px;top:440px;width:10px;height:22px;background:#e9e9e9"></div><div class="a" style="left:1410px;top:440px;width:10px;height:22px;background:#e9e9e9"></div><div class="a" style="left:1445px;top:440px;width:10px;height:22px;background:#e9e9e9"></div><div class="a" style="left:1480px;top:440px;width:10px;height:22px;background:#e9e9e9"></div><div class="a" style="left:1515px;top:440px;width:10px;height:22px;background:#e9e9e9"></div><div class="a" style="left:1550px;top:440px;width:10px;height:22px;background:#e9e9e9"></div><div class="a" style="left:1585px;top:440px;width:10px;height:22px;background:#e9e9e9"></div><div class="a" style="left:850px;top:464px;width:10px;height:21px;background:#e6e6e6"></div><div class="a" style="left:885px;top:464px;width:10px;height:21px;background:#e6e6e6"></div><div class="a" style="left:920px;top:464px;width:10px;height:21px;background:#e6e6e6"></div><div class="a" style="left:955px;top:464px;width:10px;height:21px;background:#e6e6e6"></div><div class="a" style="left:990px;top:464px;width:10px;height:21px;background:#e6e6e6"></div><div class="a" style="left:1025px;top:464px;width:10px;height:21px;background:#e6e6e6"></div><div class="a" style="left:1060px;top:464px;width:10px;height:21px;background:#e6e6e6"></div><div class="a" style="left:1095px;top:464px;width:10px;height:21px;background:#e6e6e6"></div><div class="a" style="left:1130px;top:464px;width:10px;height:21px;background:#e6e6e6"></div><div class="a" style="left:1165px;top:464px;width:10px;height:21px;background:#e6e6e6"></div><div class="a" style="left:1200px;top:464px;width:10px;height:21px;background:#e6e6e6"></div><div class="a" style="left:1235px;top:464px;width:10px;height:21px;background:#e6e6e6"></div><div class="a" style="left:1270px;top:464px;width:10px;height:21px;background:#e6e6e6"></div><div class="a" style="left:1305px;top:464px;width:10px;height:21px;background:#e6e6e6"></div><div class="a" style="left:1340px;top:464px;width:10px;height:21px;background:#e6e6e6"></div><div class="a" style="left:1375px;top:464px;width:10px;height:21px;background:#e6e6e6"></div><div class="a" style="left:1410px;top:464px;width:10px;height:21px;background:#e6e6e6"></div><div class="a" style="left:1445px;top:464px;width:10px;height:21px;background:#e6e6e6"></div><div class="a" style="left:1480px;top:464px;width:10px;height:21px;background:#e6e6e6"></div><div class="a" style="left:1515px;top:464px;width:10px;height:21px;background:#e6e6e6"></div><div class="a" style="left:1550px;top:464px;width:10px;height:21px;background:#e6e6e6"></div><div class="a" style="left:1585px;top:464px;width:10px;height:21px;background:#e6e6e6"></div><div class="a" style="left:850px;top:488px;width:10px;height:21px;background:#e6e6e6"></div><div class="a" style="left:885px;top:488px;width:10px;height:21px;background:#e6e6e6"></div><div class="a" style="left:920px;top:488px;width:10px;height:21px;background:#e6e6e6"></div><div class="a" style="left:955px;top:488px;width:10px;height:21px;background:#e6e6e6"></div><div class="a" style="left:990px;top:488px;width:10px;height:21px;background:#e6e6e6"></div><div class="a" style="left:1025px;top:488px;width:10px;height:21px;background:#e6e6e6"></div><div class="a" style="left:1060px;top:488px;width:10px;height:21px;background:#e6e6e6"></div><div class="a" style="left:1095px;top:488px;width:10px;height:21px;background:#e6e6e6"></div><div class="a" style="left:1130px;top:488px;width:10px;height:21px;background:#e6e6e6"></div><div class="a" style="left:1165px;top:488px;width:10px;height:21px;background:#e6e6e6"></div><div class="a" style="left:1200px;top:488px;width:10px;height:21px;background:#e6e6e6"></div><div class="a" style="left:1235px;top:488px;width:10px;height:21px;background:#e6e6e6"></div><div class="a" style="left:1270px;top:488px;width:10px;height:21px;background:#e6e6e6"></div><div class="a" style="left:1305px;top:488px;width:10px;height:21px;background:#e6e6e6"></div><div class="a" style="left:1340px;top:488px;width:10px;height:21px;background:#e6e6e6"></div><div class="a" style="left:1375px;top:488px;width:10px;height:21px;background:#e6e6e6"></div><div class="a" style="left:1410px;top:488px;width:10px;height:21px;background:#e6e6e6"></div><div class="a" style="left:1445px;top:488px;width:10px;height:21px;background:#e6e6e6"></div><div class="a" style="left:1480px;top:488px;width:10px;height:21px;background:#e6e6e6"></div><div class="a" style="left:1515px;top:488px;width:10px;height:21px;background:#e6e6e6"></div><div class="a" style="left:1550px;top:488px;width:10px;height:21px;background:#e6e6e6"></div><div class="a" style="left:1585px;top:488px;width:10px;height:21px;background:#e6e6e6"></div><div class="a" style="left:850px;top:512px;width:10px;height:21px;background:#e6e6e6"></div><div class="a" style="left:885px;top:512px;width:10px;height:21px;background:#e6e6e6"></div><div class="a" style="left:920px;top:512px;width:10px;height:21px;background:#e6e6e6"></div><div class="a" style="left:955px;top:512px;width:10px;height:21px;background:#e6e6e6"></div><div class="a" style="left:990px;top:512px;width:10px;height:21px;background:#e6e6e6"></div><div class="a" style="left:1025px;top:512px;width:10px;height:21px;background:#e6e6e6"></div><div class="a" style="left:1060px;top:512px;width:10px;height:21px;background:#e6e6e6"></div><div class="a" style="left:1095px;top:512px;width:10px;height:21px;background:#e6e6e6"></div><div class="a" style="left:1130px;top:512px;width:10px;height:21px;background:#e6e6e6"></div><div class="a" style="left:1165px;top:512px;width:10px;height:21px;background:#e6e6e6"></div><div class="a" style="left:1200px;top:512px;width:10px;height:21px;background:#e6e6e6"></div><div class="a" style="left:1235px;top:512px;width:10px;height:21px;background:#e6e6e6"></div><div class="a" style="left:1270px;top:512px;width:10px;height:21px;background:#e6e6e6"></div><div class="a" style="left:1305px;top:512px;width:10px;height:21px;background:#e6e6e6"></div><div class="a" style="left:1340px;top:512px;width:10px;height:21px;background:#e6e6e6"></div><div class="a" style="left:1375px;top:512px;width:10px;height:21px;background:#e6e6e6"></div><div class="a" style="left:1410px;top:512px;width:10px;height:21px;background:#e6e6e6"></div><div class="a" style="left:1445px;top:512px;width:10px;height:21px;background:#e6e6e6"></div><div class="a" style="left:1480px;top:512px;width:10px;height:21px;background:#e6e6e6"></div><div class="a" style="left:1515px;top:512px;width:10px;height:21px;background:#e6e6e6"></div><div class="a" style="left:1550px;top:512px;width:10px;height:21px;background:#e6e6e6"></div><div class="a" style="left:1585px;top:512px;width:10px;height:21px;background:#e6e6e6"></div><div class="a" style="left:850px;top:536px;width:10px;height:21px;background:#e6e6e6"></div><div class="a" style="left:885px;top:536px;width:10px;height:21px;background:#e6e6e6"></div><div class="a" style="left:920px;top:536px;width:10px;height:21px;background:#e6e6e6"></div><div class="a" style="left:955px;top:536px;width:10px;height:21px;background:#e6e6e6"></div><div class="a" style="left:990px;top:536px;width:10px;height:21px;background:#e6e6e6"></div><div class="a" style="left:1025px;top:536px;width:10px;height:21px;background:#e6e6e6"></div><div class="a" style="left:1060px;top:536px;width:10px;height:21px;background:#e6e6e6"></div><div class="a" style="left:1095px;top:536px;width:10px;height:21px;background:#e6e6e6"></div><div class="a" style="left:1130px;top:536px;width:10px;height:21px;background:#e6e6e6"></div><div class="a" style="left:1165px;top:536px;width:10px;height:21px;background:#e6e6e6"></div><div class="a" style="left:1200px;top:536px;width:10px;height:21px;background:#e6e6e6"></div><div class="a" style="left:1235px;top:536px;width:10px;height:21px;background:#e6e6e6"></div><div class="a" style="left:1270px;top:536px;width:10px;height:21px;background:#e6e6e6"></div><div class="a" style="left:1305px;top:536px;width:10px;height:21px;background:#e6e6e6"></div><div class="a" style="left:1340px;top:536px;width:10px;height:21px;background:#e6e6e6"></div><div class="a" style="left:1375px;top:536px;width:10px;height:21px;background:#e6e6e6"></div><div class="a" style="left:1410px;top:536px;width:10px;height:21px;background:#e6e6e6"></div><div class="a" style="left:1445px;top:536px;width:10px;height:21px;background:#e6e6e6"></div><div class="a" style="left:1480px;top:536px;width:10px;height:21px;background:#e6e6e6"></div><div class="a" style="left:1515px;top:536px;width:10px;height:21px;background:#e6e6e6"></div><div class="a" style="left:1550px;top:536px;width:10px;height:21px;background:#e6e6e6"></div><div class="a" style="left:1585px;top:536px;width:10px;height:21px;background:#e6e6e6"></div><div class="a" style="left:850px;top:560px;width:10px;height:21px;background:#e6e6e6"></div><div class="a" style="left:885px;top:560px;width:10px;height:21px;background:#e6e6e6"></div><div class="a" style="left:920px;top:560px;width:10px;height:21px;background:#e6e6e6"></div><div class="a" style="left:955px;top:560px;width:10px;height:21px;background:#e6e6e6"></div><div class="a" style="left:990px;top:560px;width:10px;height:21px;background:#e6e6e6"></div><div class="a" style="left:1025px;top:560px;width:10px;height:21px;background:#e6e6e6"></div><div class="a" style="left:1060px;top:560px;width:10px;height:21px;background:#e6e6e6"></div><div class="a" style="left:1095px;top:560px;width:10px;height:21px;background:#e6e6e6"></div><div class="a" style="left:1130px;top:560px;width:10px;height:21px;background:#e6e6e6"></div><div class="a" style="left:1165px;top:560px;width:10px;height:21px;background:#e6e6e6"></div><div class="a" style="left:1200px;top:560px;width:10px;height:21px;background:#e6e6e6"></div><div class="a" style="left:1235px;top:560px;width:10px;height:21px;background:#e6e6e6"></div><div class="a" style="left:1270px;top:560px;width:10px;height:21px;background:#e6e6e6"></div><div class="a" style="left:1305px;top:560px;width:10px;height:21px;background:#e6e6e6"></div><div class="a" style="left:1340px;top:560px;width:10px;height:21px;background:#e6e6e6"></div><div class="a" style="left:1375px;top:560px;width:10px;height:21px;background:#e6e6e6"></div><div class="a" style="left:1410px;top:560px;width:10px;height:21px;background:#e6e6e6"></div><div class="a" style="left:1445px;top:560px;width:10px;height:21px;background:#e6e6e6"></div><div class="a" style="left:1480px;top:560px;width:10px;height:21px;background:#e6e6e6"></div><div class="a" style="left:1515px;top:560px;width:10px;height:21px;background:#e6e6e6"></div><div class="a" style="left:1550px;top:560px;width:10px;height:21px;background:#e6e6e6"></div><div class="a" style="left:1585px;top:560px;width:10px;height:21px;background:#e6e6e6"></div><div class="a" style="left:850px;top:584px;width:10px;height:21px;background:#e6e6e6"></div><div class="a" style="left:885px;top:584px;width:10px;height:21px;background:#e6e6e6"></div><div class="a" style="left:920px;top:584px;width:10px;height:21px;background:#e6e6e6"></div><div class="a" style="left:955px;top:584px;width:10px;height:21px;background:#e6e6e6"></div><div class="a" style="left:990px;top:584px;width:10px;height:21px;background:#e6e6e6"></div><div class="a" style="left:1025px;top:584px;width:10px;height:21px;background:#e6e6e6"></div><div class="a" style="left:1060px;top:584px;width:10px;height:21px;background:#e6e6e6"></div><div class="a" style="left:1095px;top:584px;width:10px;height:21px;background:#e6e6e6"></div><div class="a" style="left:1130px;top:584px;width:10px;height:21px;background:#e6e6e6"></div><div class="a" style="left:1165px;top:584px;width:10px;height:21px;background:#e6e6e6"></div><div class="a" style="left:1200px;top:584px;width:10px;height:21px;background:#e6e6e6"></div><div class="a" style="left:1235px;top:584px;width:10px;height:21px;background:#e6e6e6"></div><div class="a" style="left:1270px;top:584px;width:10px;height:21px;background:#e6e6e6"></div><div class="a" style="left:1305px;top:584px;width:10px;height:21px;background:#e6e6e6"></div><div class="a" style="left:1340px;top:584px;width:10px;height:21px;background:#e6e6e6"></div><div class="a" style="left:1375px;top:584px;width:10px;height:21px;background:#e6e6e6"></div><div class="a" style="left:1410px;top:584px;width:10px;height:21px;background:#e6e6e6"></div><div class="a" style="left:1445px;top:584px;width:10px;height:21px;background:#e6e6e6"></div><div class="a" style="left:1480px;top:584px;width:10px;height:21px;background:#e6e6e6"></div><div class="a" style="left:1515px;top:584px;width:10px;height:21px;background:#e6e6e6"></div><div class="a" style="left:1550px;top:584px;width:10px;height:21px;background:#e6e6e6"></div><div class="a" style="left:1585px;top:584px;width:10px;height:21px;background:#e6e6e6"></div><div class="a" style="left:850px;top:609px;width:10px;height:21px;background:#e9e9e9"></div><div class="a" style="left:885px;top:609px;width:10px;height:21px;background:#e9e9e9"></div><div class="a" style="left:920px;top:609px;width:10px;height:21px;background:#e9e9e9"></div><div class="a" style="left:955px;top:609px;width:10px;height:21px;background:#e9e9e9"></div><div class="a" style="left:990px;top:609px;width:10px;height:21px;background:#e9e9e9"></div><div class="a" style="left:1025px;top:609px;width:10px;height:21px;background:#e9e9e9"></div><div class="a" style="left:1060px;top:609px;width:10px;height:21px;background:#e9e9e9"></div><div class="a" style="left:1095px;top:609px;width:10px;height:21px;background:#e9e9e9"></div><div class="a" style="left:1130px;top:609px;width:10px;height:21px;background:#e9e9e9"></div><div class="a" style="left:1165px;top:609px;width:10px;height:21px;background:#e9e9e9"></div><div class="a" style="left:1200px;top:609px;width:10px;height:21px;background:#e9e9e9"></div><div class="a" style="left:1235px;top:609px;width:10px;height:21px;background:#e9e9e9"></div><div class="a" style="left:1270px;top:609px;width:10px;height:21px;background:#e9e9e9"></div><div class="a" style="left:1305px;top:609px;width:10px;height:21px;background:#e9e9e9"></div><div class="a" style="left:1340px;top:609px;width:10px;height:21px;background:#e9e9e9"></div><div class="a" style="left:1375px;top:609px;width:10px;height:21px;background:#e9e9e9"></div><div class="a" style="left:1410px;top:609px;width:10px;height:21px;background:#e9e9e9"></div><div class="a" style="left:1445px;top:609px;width:10px;height:21px;background:#e9e9e9"></div><div class="a" style="left:1480px;top:609px;width:10px;height:21px;background:#e9e9e9"></div><div class="a" style="left:1515px;top:609px;width:10px;height:21px;background:#e9e9e9"></div><div class="a" style="left:1550px;top:609px;width:10px;height:21px;background:#e9e9e9"></div><div class="a" style="left:1585px;top:609px;width:10px;height:21px;background:#e9e9e9"></div><div class="a" style="left:850px;top:632px;width:10px;height:21px;background:#e6e6e6"></div><div class="a" style="left:885px;top:632px;width:10px;height:21px;background:#e6e6e6"></div><div class="a" style="left:920px;top:632px;width:10px;height:21px;background:#e6e6e6"></div><div class="a" style="left:955px;top:632px;width:10px;height:21px;background:#e6e6e6"></div><div class="a" style="left:990px;top:632px;width:10px;height:21px;background:#e6e6e6"></div><div class="a" style="left:1025px;top:632px;width:10px;height:21px;background:#e6e6e6"></div><div class="a" style="left:1060px;top:632px;width:10px;height:21px;background:#e6e6e6"></div><div class="a" style="left:1095px;top:632px;width:10px;height:21px;background:#e6e6e6"></div><div class="a" style="left:1130px;top:632px;width:10px;height:21px;background:#e6e6e6"></div><div class="a" style="left:1165px;top:632px;width:10px;height:21px;background:#e6e6e6"></div><div class="a" style="left:1200px;top:632px;width:10px;height:21px;background:#e6e6e6"></div><div class="a" style="left:1235px;top:632px;width:10px;height:21px;background:#e6e6e6"></div><div class="a" style="left:1270px;top:632px;width:10px;height:21px;background:#e6e6e6"></div><div class="a" style="left:1305px;top:632px;width:10px;height:21px;background:#e6e6e6"></div><div class="a" style="left:1340px;top:632px;width:10px;height:21px;background:#e6e6e6"></div><div class="a" style="left:1375px;top:632px;width:10px;height:21px;background:#e6e6e6"></div><div class="a" style="left:1410px;top:632px;width:10px;height:21px;background:#e6e6e6"></div><div class="a" style="left:1445px;top:632px;width:10px;height:21px;background:#e6e6e6"></div><div class="a" style="left:1480px;top:632px;width:10px;height:21px;background:#e6e6e6"></div><div class="a" style="left:1515px;top:632px;width:10px;height:21px;background:#e6e6e6"></div><div class="a" style="left:1550px;top:632px;width:10px;height:21px;background:#e6e6e6"></div><div class="a" style="left:1585px;top:632px;width:10px;height:21px;background:#e6e6e6"></div><div class="a" style="left:850px;top:656px;width:10px;height:21px;background:#e6e6e6"></div><div class="a" style="left:885px;top:656px;width:10px;height:21px;background:#e6e6e6"></div><div class="a" style="left:920px;top:656px;width:10px;height:21px;background:#e6e6e6"></div><div class="a" style="left:955px;top:656px;width:10px;height:21px;background:#e6e6e6"></div><div class="a" style="left:990px;top:656px;width:10px;height:21px;background:#e6e6e6"></div><div class="a" style="left:1025px;top:656px;width:10px;height:21px;background:#e6e6e6"></div><div class="a" style="left:1060px;top:656px;width:10px;height:21px;background:#e6e6e6"></div><div class="a" style="left:1095px;top:656px;width:10px;height:21px;background:#e6e6e6"></div><div class="a" style="left:1130px;top:656px;width:10px;height:21px;background:#e6e6e6"></div><div class="a" style="left:1165px;top:656px;width:10px;height:21px;background:#e6e6e6"></div><div class="a" style="left:1200px;top:656px;width:10px;height:21px;background:#e6e6e6"></div><div class="a" style="left:1235px;top:656px;width:10px;height:21px;background:#e6e6e6"></div><div class="a" style="left:1270px;top:656px;width:10px;height:21px;background:#e6e6e6"></div><div class="a" style="left:1305px;top:656px;width:10px;height:21px;background:#e6e6e6"></div><div class="a" style="left:1340px;top:656px;width:10px;height:21px;background:#e6e6e6"></div><div class="a" style="left:1375px;top:656px;width:10px;height:21px;background:#e6e6e6"></div><div class="a" style="left:1410px;top:656px;width:10px;height:21px;background:#e6e6e6"></div><div class="a" style="left:1445px;top:656px;width:10px;height:21px;background:#e6e6e6"></div><div class="a" style="left:1480px;top:656px;width:10px;height:21px;background:#e6e6e6"></div><div class="a" style="left:1515px;top:656px;width:10px;height:21px;background:#e6e6e6"></div><div class="a" style="left:1550px;top:656px;width:10px;height:21px;background:#e6e6e6"></div><div class="a" style="left:1585px;top:656px;width:10px;height:21px;background:#e6e6e6"></div><div class="a" style="left:850px;top:680px;width:10px;height:21px;background:#e6e6e6"></div><div class="a" style="left:885px;top:680px;width:10px;height:21px;background:#e6e6e6"></div><div class="a" style="left:920px;top:680px;width:10px;height:21px;background:#e6e6e6"></div><div class="a" style="left:955px;top:680px;width:10px;height:21px;background:#e6e6e6"></div><div class="a" style="left:990px;top:680px;width:10px;height:21px;background:#e6e6e6"></div><div class="a" style="left:1025px;top:680px;width:10px;height:21px;background:#e6e6e6"></div><div class="a" style="left:1060px;top:680px;width:10px;height:21px;background:#e6e6e6"></div><div class="a" style="left:1095px;top:680px;width:10px;height:21px;background:#e6e6e6"></div><div class="a" style="left:1130px;top:680px;width:10px;height:21px;background:#e6e6e6"></div><div class="a" style="left:1165px;top:680px;width:10px;height:21px;background:#e6e6e6"></div><div class="a" style="left:1200px;top:680px;width:10px;height:21px;background:#e6e6e6"></div><div class="a" style="left:1235px;top:680px;width:10px;height:21px;background:#e6e6e6"></div><div class="a" style="left:1270px;top:680px;width:10px;height:21px;background:#e6e6e6"></div><div class="a" style="left:1305px;top:680px;width:10px;height:21px;background:#e6e6e6"></div><div class="a" style="left:1340px;top:680px;width:10px;height:21px;background:#e6e6e6"></div><div class="a" style="left:1375px;top:680px;width:10px;height:21px;background:#e6e6e6"></div><div class="a" style="left:1410px;top:680px;width:10px;height:21px;background:#e6e6e6"></div><div class="a" style="left:1445px;top:680px;width:10px;height:21px;background:#e6e6e6"></div><div class="a" style="left:1480px;top:680px;width:10px;height:21px;background:#e6e6e6"></div><div class="a" style="left:1515px;top:680px;width:10px;height:21px;background:#e6e6e6"></div><div class="a" style="left:1550px;top:680px;width:10px;height:21px;background:#e6e6e6"></div><div class="a" style="left:1585px;top:680px;width:10px;height:21px;background:#e6e6e6"></div><div class="a" style="left:850px;top:704px;width:10px;height:21px;background:#e6e6e6"></div><div class="a" style="left:885px;top:704px;width:10px;height:21px;background:#e6e6e6"></div><div class="a" style="left:920px;top:704px;width:10px;height:21px;background:#e6e6e6"></div><div class="a" style="left:955px;top:704px;width:10px;height:21px;background:#e6e6e6"></div><div class="a" style="left:990px;top:704px;width:10px;height:21px;background:#e6e6e6"></div><div class="a" style="left:1025px;top:704px;width:10px;height:21px;background:#e6e6e6"></div><div class="a" style="left:1060px;top:704px;width:10px;height:21px;background:#e6e6e6"></div><div class="a" style="left:1095px;top:704px;width:10px;height:21px;background:#e6e6e6"></div><div class="a" style="left:1130px;top:704px;width:10px;height:21px;background:#e6e6e6"></div><div class="a" style="left:1165px;top:704px;width:10px;height:21px;background:#e6e6e6"></div><div class="a" style="left:1200px;top:704px;width:10px;height:21px;background:#e6e6e6"></div><div class="a" style="left:1235px;top:704px;width:10px;height:21px;background:#e6e6e6"></div><div class="a" style="left:1270px;top:704px;width:10px;height:21px;background:#e6e6e6"></div><div class="a" style="left:1305px;top:704px;width:10px;height:21px;background:#e6e6e6"></div><div class="a" style="left:1340px;top:704px;width:10px;height:21px;background:#e6e6e6"></div><div class="a" style="left:1375px;top:704px;width:10px;height:21px;background:#e6e6e6"></div><div class="a" style="left:1410px;top:704px;width:10px;height:21px;background:#e6e6e6"></div><div class="a" style="left:1445px;top:704px;width:10px;height:21px;background:#e6e6e6"></div><div class="a" style="left:1480px;top:704px;width:10px;height:21px;background:#e6e6e6"></div><div class="a" style="left:1515px;top:704px;width:10px;height:21px;background:#e6e6e6"></div><div class="a" style="left:1550px;top:704px;width:10px;height:21px;background:#e6e6e6"></div><div class="a" style="left:1585px;top:704px;width:10px;height:21px;background:#e6e6e6"></div><div class="a" style="left:850px;top:728px;width:10px;height:21px;background:#e6e6e6"></div><div class="a" style="left:885px;top:728px;width:10px;height:21px;background:#e6e6e6"></div><div class="a" style="left:920px;top:728px;width:10px;height:21px;background:#e6e6e6"></div><div class="a" style="left:955px;top:728px;width:10px;height:21px;background:#e6e6e6"></div><div class="a" style="left:990px;top:728px;width:10px;height:21px;background:#e6e6e6"></div><div class="a" style="left:1025px;top:728px;width:10px;height:21px;background:#e6e6e6"></div><div class="a" style="left:1060px;top:728px;width:10px;height:21px;background:#e6e6e6"></div><div class="a" style="left:1095px;top:728px;width:10px;height:21px;background:#e6e6e6"></div><div class="a" style="left:1130px;top:728px;width:10px;height:21px;background:#e6e6e6"></div><div class="a" style="left:1165px;top:728px;width:10px;height:21px;background:#e6e6e6"></div><div class="a" style="left:1200px;top:728px;width:10px;height:21px;background:#e6e6e6"></div><div class="a" style="left:1235px;top:728px;width:10px;height:21px;background:#e6e6e6"></div><div class="a" style="left:1270px;top:728px;width:10px;height:21px;background:#e6e6e6"></div><div class="a" style="left:1305px;top:728px;width:10px;height:21px;background:#e6e6e6"></div><div class="a" style="left:1340px;top:728px;width:10px;height:21px;background:#e6e6e6"></div><div class="a" style="left:1375px;top:728px;width:10px;height:21px;background:#e6e6e6"></div><div class="a" style="left:1410px;top:728px;width:10px;height:21px;background:#e6e6e6"></div><div class="a" style="left:1445px;top:728px;width:10px;height:21px;background:#e6e6e6"></div><div class="a" style="left:1480px;top:728px;width:10px;height:21px;background:#e6e6e6"></div><div class="a" style="left:1515px;top:728px;width:10px;height:21px;background:#e6e6e6"></div><div class="a" style="left:1550px;top:728px;width:10px;height:21px;background:#e6e6e6"></div><div class="a" style="left:1585px;top:728px;width:10px;height:21px;background:#e6e6e6"></div><div class="a" style="left:850px;top:752px;width:10px;height:21px;background:#e6e6e6"></div><div class="a" style="left:885px;top:752px;width:10px;height:21px;background:#e6e6e6"></div><div class="a" style="left:920px;top:752px;width:10px;height:21px;background:#e6e6e6"></div><div class="a" style="left:955px;top:752px;width:10px;height:21px;background:#e6e6e6"></div><div class="a" style="left:990px;top:752px;width:10px;height:21px;background:#e6e6e6"></div><div class="a" style="left:1025px;top:752px;width:10px;height:21px;background:#e6e6e6"></div><div class="a" style="left:1060px;top:752px;width:10px;height:21px;background:#e6e6e6"></div><div class="a" style="left:1095px;top:752px;width:10px;height:21px;background:#e6e6e6"></div><div class="a" style="left:1130px;top:752px;width:10px;height:21px;background:#e6e6e6"></div><div class="a" style="left:1165px;top:752px;width:10px;height:21px;background:#e6e6e6"></div><div class="a" style="left:1200px;top:752px;width:10px;height:21px;background:#e6e6e6"></div><div class="a" style="left:1235px;top:752px;width:10px;height:21px;background:#e6e6e6"></div><div class="a" style="left:1270px;top:752px;width:10px;height:21px;background:#e6e6e6"></div><div class="a" style="left:1305px;top:752px;width:10px;height:21px;background:#e6e6e6"></div><div class="a" style="left:1340px;top:752px;width:10px;height:21px;background:#e6e6e6"></div><div class="a" style="left:1375px;top:752px;width:10px;height:21px;background:#e6e6e6"></div><div class="a" style="left:1410px;top:752px;width:10px;height:21px;background:#e6e6e6"></div><div class="a" style="left:1445px;top:752px;width:10px;height:21px;background:#e6e6e6"></div><div class="a" style="left:1480px;top:752px;width:10px;height:21px;background:#e6e6e6"></div><div class="a" style="left:1515px;top:752px;width:10px;height:21px;background:#e6e6e6"></div><div class="a" style="left:1550px;top:752px;width:10px;height:21px;background:#e6e6e6"></div><div class="a" style="left:1585px;top:752px;width:10px;height:21px;background:#e6e6e6"></div><div class="a" style="left:850px;top:778px;width:10px;height:20px;background:#e9e9e9"></div><div class="a" style="left:885px;top:778px;width:10px;height:20px;background:#e9e9e9"></div><div class="a" style="left:920px;top:778px;width:10px;height:20px;background:#e9e9e9"></div><div class="a" style="left:955px;top:778px;width:10px;height:20px;background:#e9e9e9"></div><div class="a" style="left:990px;top:778px;width:10px;height:20px;background:#e9e9e9"></div><div class="a" style="left:1025px;top:778px;width:10px;height:20px;background:#e9e9e9"></div><div class="a" style="left:1060px;top:778px;width:10px;height:20px;background:#e9e9e9"></div><div class="a" style="left:1095px;top:778px;width:10px;height:20px;background:#e9e9e9"></div><div class="a" style="left:1130px;top:778px;width:10px;height:20px;background:#e9e9e9"></div><div class="a" style="left:1165px;top:778px;width:10px;height:20px;background:#e9e9e9"></div><div class="a" style="left:1200px;top:778px;width:10px;height:20px;background:#e9e9e9"></div><div class="a" style="left:1235px;top:778px;width:10px;height:20px;background:#e9e9e9"></div><div class="a" style="left:1270px;top:778px;width:10px;height:20px;background:#e9e9e9"></div><div class="a" style="left:1305px;top:778px;width:10px;height:20px;background:#e9e9e9"></div><div class="a" style="left:1340px;top:778px;width:10px;height:20px;background:#e9e9e9"></div><div class="a" style="left:1375px;top:778px;width:10px;height:20px;background:#e9e9e9"></div><div class="a" style="left:1410px;top:778px;width:10px;height:20px;background:#e9e9e9"></div><div class="a" style="left:1445px;top:778px;width:10px;height:20px;background:#e9e9e9"></div><div class="a" style="left:1480px;top:778px;width:10px;height:20px;background:#e9e9e9"></div><div class="a" style="left:1515px;top:778px;width:10px;height:20px;background:#e9e9e9"></div><div class="a" style="left:1550px;top:778px;width:10px;height:20px;background:#e9e9e9"></div><div class="a" style="left:1585px;top:778px;width:10px;height:20px;background:#e9e9e9"></div><div class="a" style="left:850px;top:800px;width:10px;height:21px;background:#e6e6e6"></div><div class="a" style="left:885px;top:800px;width:10px;height:21px;background:#e6e6e6"></div><div class="a" style="left:920px;top:800px;width:10px;height:21px;background:#e6e6e6"></div><div class="a" style="left:955px;top:800px;width:10px;height:21px;background:#e6e6e6"></div><div class="a" style="left:990px;top:800px;width:10px;height:21px;background:#e6e6e6"></div><div class="a" style="left:1025px;top:800px;width:10px;height:21px;background:#e6e6e6"></div><div class="a" style="left:1060px;top:800px;width:10px;height:21px;background:#e6e6e6"></div><div class="a" style="left:1095px;top:800px;width:10px;height:21px;background:#e6e6e6"></div><div class="a" style="left:1130px;top:800px;width:10px;height:21px;background:#e6e6e6"></div><div class="a" style="left:1165px;top:800px;width:10px;height:21px;background:#e6e6e6"></div><div class="a" style="left:1200px;top:800px;width:10px;height:21px;background:#e6e6e6"></div><div class="a" style="left:1235px;top:800px;width:10px;height:21px;background:#e6e6e6"></div><div class="a" style="left:1270px;top:800px;width:10px;height:21px;background:#e6e6e6"></div><div class="a" style="left:1305px;top:800px;width:10px;height:21px;background:#e6e6e6"></div><div class="a" style="left:1340px;top:800px;width:10px;height:21px;background:#e6e6e6"></div><div class="a" style="left:1375px;top:800px;width:10px;height:21px;background:#e6e6e6"></div><div class="a" style="left:1410px;top:800px;width:10px;height:21px;background:#e6e6e6"></div><div class="a" style="left:1445px;top:800px;width:10px;height:21px;background:#e6e6e6"></div><div class="a" style="left:1480px;top:800px;width:10px;height:21px;background:#e6e6e6"></div><div class="a" style="left:1515px;top:800px;width:10px;height:21px;background:#e6e6e6"></div><div class="a" style="left:1550px;top:800px;width:10px;height:21px;background:#e6e6e6"></div><div class="a" style="left:1585px;top:800px;width:10px;height:21px;background:#e6e6e6"></div><div class="a" style="left:850px;top:824px;width:10px;height:20px;background:#e6e6e6"></div><div class="a" style="left:885px;top:824px;width:10px;height:20px;background:#e6e6e6"></div><div class="a" style="left:920px;top:824px;width:10px;height:20px;background:#e6e6e6"></div><div class="a" style="left:955px;top:824px;width:10px;height:20px;background:#e6e6e6"></div><div class="a" style="left:990px;top:824px;width:10px;height:20px;background:#e6e6e6"></div><div class="a" style="left:1025px;top:824px;width:10px;height:20px;background:#e6e6e6"></div><div class="a" style="left:1060px;top:824px;width:10px;height:20px;background:#e6e6e6"></div><div class="a" style="left:1095px;top:824px;width:10px;height:20px;background:#e6e6e6"></div><div class="a" style="left:1130px;top:824px;width:10px;height:20px;background:#e6e6e6"></div><div class="a" style="left:1165px;top:824px;width:10px;height:20px;background:#e6e6e6"></div><div class="a" style="left:1200px;top:824px;width:10px;height:20px;background:#e6e6e6"></div><div class="a" style="left:1235px;top:824px;width:10px;height:20px;background:#e6e6e6"></div><div class="a" style="left:1270px;top:824px;width:10px;height:20px;background:#e6e6e6"></div><div class="a" style="left:1305px;top:824px;width:10px;height:20px;background:#e6e6e6"></div><div class="a" style="left:1340px;top:824px;width:10px;height:20px;background:#e6e6e6"></div><div class="a" style="left:1375px;top:824px;width:10px;height:20px;background:#e6e6e6"></div><div class="a" style="left:1410px;top:824px;width:10px;height:20px;background:#e6e6e6"></div><div class="a" style="left:1445px;top:824px;width:10px;height:20px;background:#e6e6e6"></div><div class="a" style="left:1480px;top:824px;width:10px;height:20px;background:#e6e6e6"></div><div class="a" style="left:1515px;top:824px;width:10px;height:20px;background:#e6e6e6"></div><div class="a" style="left:1550px;top:824px;width:10px;height:20px;background:#e6e6e6"></div><div class="a" style="left:1585px;top:824px;width:10px;height:20px;background:#e6e6e6"></div><div class="a" style="left:850px;top:847px;width:10px;height:20px;background:#e6e6e6"></div><div class="a" style="left:885px;top:847px;width:10px;height:20px;background:#e6e6e6"></div><div class="a" style="left:920px;top:847px;width:10px;height:20px;background:#e6e6e6"></div><div class="a" style="left:955px;top:847px;width:10px;height:20px;background:#e6e6e6"></div><div class="a" style="left:990px;top:847px;width:10px;height:20px;background:#e6e6e6"></div><div class="a" style="left:1025px;top:847px;width:10px;height:20px;background:#e6e6e6"></div><div class="a" style="left:1060px;top:847px;width:10px;height:20px;background:#e6e6e6"></div><div class="a" style="left:1095px;top:847px;width:10px;height:20px;background:#e6e6e6"></div><div class="a" style="left:1130px;top:847px;width:10px;height:20px;background:#e6e6e6"></div><div class="a" style="left:1165px;top:847px;width:10px;height:20px;background:#e6e6e6"></div><div class="a" style="left:1200px;top:847px;width:10px;height:20px;background:#e6e6e6"></div><div class="a" style="left:1235px;top:847px;width:10px;height:20px;background:#e6e6e6"></div><div class="a" style="left:1270px;top:847px;width:10px;height:20px;background:#e6e6e6"></div><div class="a" style="left:1305px;top:847px;width:10px;height:20px;background:#e6e6e6"></div><div class="a" style="left:1340px;top:847px;width:10px;height:20px;background:#e6e6e6"></div><div class="a" style="left:1375px;top:847px;width:10px;height:20px;background:#e6e6e6"></div><div class="a" style="left:1410px;top:847px;width:10px;height:20px;background:#e6e6e6"></div><div class="a" style="left:1445px;top:847px;width:10px;height:20px;background:#e6e6e6"></div><div class="a" style="left:1480px;top:847px;width:10px;height:20px;background:#e6e6e6"></div><div class="a" style="left:1515px;top:847px;width:10px;height:20px;background:#e6e6e6"></div><div class="a" style="left:1550px;top:847px;width:10px;height:20px;background:#e6e6e6"></div><div class="a" style="left:1585px;top:847px;width:10px;height:20px;background:#e6e6e6"></div><div class="a" style="left:850px;top:870px;width:10px;height:20px;background:#e6e6e6"></div><div class="a" style="left:885px;top:870px;width:10px;height:20px;background:#e6e6e6"></div><div class="a" style="left:920px;top:870px;width:10px;height:20px;background:#e6e6e6"></div><div class="a" style="left:955px;top:870px;width:10px;height:20px;background:#e6e6e6"></div><div class="a" style="left:990px;top:870px;width:10px;height:20px;background:#e6e6e6"></div><div class="a" style="left:1025px;top:870px;width:10px;height:20px;background:#e6e6e6"></div><div class="a" style="left:1060px;top:870px;width:10px;height:20px;background:#e6e6e6"></div><div class="a" style="left:1095px;top:870px;width:10px;height:20px;background:#e6e6e6"></div><div class="a" style="left:1130px;top:870px;width:10px;height:20px;background:#e6e6e6"></div><div class="a" style="left:1165px;top:870px;width:10px;height:20px;background:#e6e6e6"></div><div class="a" style="left:1200px;top:870px;width:10px;height:20px;background:#e6e6e6"></div><div class="a" style="left:1235px;top:870px;width:10px;height:20px;background:#e6e6e6"></div><div class="a" style="left:1270px;top:870px;width:10px;height:20px;background:#e6e6e6"></div><div class="a" style="left:1305px;top:870px;width:10px;height:20px;background:#e6e6e6"></div><div class="a" style="left:1340px;top:870px;width:10px;height:20px;background:#e6e6e6"></div><div class="a" style="left:1375px;top:870px;width:10px;height:20px;background:#e6e6e6"></div><div class="a" style="left:1410px;top:870px;width:10px;height:20px;background:#e6e6e6"></div><div class="a" style="left:1445px;top:870px;width:10px;height:20px;background:#e6e6e6"></div><div class="a" style="left:1480px;top:870px;width:10px;height:20px;background:#e6e6e6"></div><div class="a" style="left:1515px;top:870px;width:10px;height:20px;background:#e6e6e6"></div><div class="a" style="left:1550px;top:870px;width:10px;height:20px;background:#e6e6e6"></div><div class="a" style="left:1585px;top:870px;width:10px;height:20px;background:#e6e6e6"></div><div class="a" style="left:850px;top:893px;width:10px;height:20px;background:#e6e6e6"></div><div class="a" style="left:885px;top:893px;width:10px;height:20px;background:#e6e6e6"></div><div class="a" style="left:920px;top:893px;width:10px;height:20px;background:#e6e6e6"></div><div class="a" style="left:955px;top:893px;width:10px;height:20px;background:#e6e6e6"></div><div class="a" style="left:990px;top:893px;width:10px;height:20px;background:#e6e6e6"></div><div class="a" style="left:1025px;top:893px;width:10px;height:20px;background:#e6e6e6"></div><div class="a" style="left:1060px;top:893px;width:10px;height:20px;background:#e6e6e6"></div><div class="a" style="left:1095px;top:893px;width:10px;height:20px;background:#e6e6e6"></div><div class="a" style="left:1130px;top:893px;width:10px;height:20px;background:#e6e6e6"></div><div class="a" style="left:1165px;top:893px;width:10px;height:20px;background:#e6e6e6"></div><div class="a" style="left:1200px;top:893px;width:10px;height:20px;background:#e6e6e6"></div><div class="a" style="left:1235px;top:893px;width:10px;height:20px;background:#e6e6e6"></div><div class="a" style="left:1270px;top:893px;width:10px;height:20px;background:#e6e6e6"></div><div class="a" style="left:1305px;top:893px;width:10px;height:20px;background:#e6e6e6"></div><div class="a" style="left:1340px;top:893px;width:10px;height:20px;background:#e6e6e6"></div><div class="a" style="left:1375px;top:893px;width:10px;height:20px;background:#e6e6e6"></div><div class="a" style="left:1410px;top:893px;width:10px;height:20px;background:#e6e6e6"></div><div class="a" style="left:1445px;top:893px;width:10px;height:20px;background:#e6e6e6"></div><div class="a" style="left:1480px;top:893px;width:10px;height:20px;background:#e6e6e6"></div><div class="a" style="left:1515px;top:893px;width:10px;height:20px;background:#e6e6e6"></div><div class="a" style="left:1550px;top:893px;width:10px;height:20px;background:#e6e6e6"></div><div class="a" style="left:1585px;top:893px;width:10px;height:20px;background:#e6e6e6"></div><div class="a" style="left:850px;top:916px;width:10px;height:20px;background:#e6e6e6"></div><div class="a" style="left:885px;top:916px;width:10px;height:20px;background:#e6e6e6"></div><div class="a" style="left:920px;top:916px;width:10px;height:20px;background:#e6e6e6"></div><div class="a" style="left:955px;top:916px;width:10px;height:20px;background:#e6e6e6"></div><div class="a" style="left:990px;top:916px;width:10px;height:20px;background:#e6e6e6"></div><div class="a" style="left:1025px;top:916px;width:10px;height:20px;background:#e6e6e6"></div><div class="a" style="left:1060px;top:916px;width:10px;height:20px;background:#e6e6e6"></div><div class="a" style="left:1095px;top:916px;width:10px;height:20px;background:#e6e6e6"></div><div class="a" style="left:1130px;top:916px;width:10px;height:20px;background:#e6e6e6"></div><div class="a" style="left:1165px;top:916px;width:10px;height:20px;background:#e6e6e6"></div><div class="a" style="left:1200px;top:916px;width:10px;height:20px;background:#e6e6e6"></div><div class="a" style="left:1235px;top:916px;width:10px;height:20px;background:#e6e6e6"></div><div class="a" style="left:1270px;top:916px;width:10px;height:20px;background:#e6e6e6"></div><div class="a" style="left:1305px;top:916px;width:10px;height:20px;background:#e6e6e6"></div><div class="a" style="left:1340px;top:916px;width:10px;height:20px;background:#e6e6e6"></div><div class="a" style="left:1375px;top:916px;width:10px;height:20px;background:#e6e6e6"></div><div class="a" style="left:1410px;top:916px;width:10px;height:20px;background:#e6e6e6"></div><div class="a" style="left:1445px;top:916px;width:10px;height:20px;background:#e6e6e6"></div><div class="a" style="left:1480px;top:916px;width:10px;height:20px;background:#e6e6e6"></div><div class="a" style="left:1515px;top:916px;width:10px;height:20px;background:#e6e6e6"></div><div class="a" style="left:1550px;top:916px;width:10px;height:20px;background:#e6e6e6"></div><div class="a" style="left:1585px;top:916px;width:10px;height:20px;background:#e6e6e6"></div>
<div class="a" style="left:850px;top:372px;width:10px;height:65px;background:#e9ebe6"></div><div class="a" style="left:885px;top:372px;width:10px;height:65px;background:#e9ebe6"></div><div class="a" style="left:920px;top:372px;width:10px;height:65px;background:#e9ebe6"></div><div class="a" style="left:955px;top:372px;width:10px;height:65px;background:#e9ebe6"></div><div class="a" style="left:990px;top:372px;width:10px;height:65px;background:#e9ebe6"></div><div class="a" style="left:1025px;top:372px;width:10px;height:65px;background:#e9ebe6"></div><div class="a" style="left:1060px;top:372px;width:10px;height:65px;background:#e9ebe6"></div><div class="a" style="left:1095px;top:372px;width:10px;height:65px;background:#e9ebe6"></div><div class="a" style="left:1130px;top:372px;width:10px;height:65px;background:#e9ebe6"></div><div class="a" style="left:1165px;top:372px;width:10px;height:65px;background:#e9ebe6"></div><div class="a" style="left:1200px;top:372px;width:10px;height:65px;background:#e9ebe6"></div><div class="a" style="left:1235px;top:372px;width:10px;height:65px;background:#e9ebe6"></div><div class="a" style="left:1270px;top:372px;width:10px;height:65px;background:#e9ebe6"></div><div class="a" style="left:1305px;top:372px;width:10px;height:65px;background:#e9ebe6"></div><div class="a" style="left:1340px;top:372px;width:10px;height:65px;background:#e9ebe6"></div><div class="a" style="left:1375px;top:372px;width:10px;height:65px;background:#e9ebe6"></div><div class="a" style="left:1410px;top:372px;width:10px;height:65px;background:#e9ebe6"></div><div class="a" style="left:1445px;top:372px;width:10px;height:65px;background:#e9ebe6"></div><div class="a" style="left:1480px;top:372px;width:10px;height:65px;background:#e9ebe6"></div><div class="a" style="left:1515px;top:372px;width:10px;height:65px;background:#e9ebe6"></div><div class="a" style="left:1550px;top:372px;width:10px;height:65px;background:#e9ebe6"></div><div class="a" style="left:1585px;top:372px;width:10px;height:65px;background:#e9ebe6"></div>
<div class="t k" style="left:1217.46px;top:377.11px;font-size:10.5px;font-weight:bold;color:#f4f9d8;transform:scaleX(0.8800);">43</div>
<div class="t k" style="left:1217.0px;top:429.0px;font-size:10.5px;font-weight:bold;color:#f4f9d8;transform-origin:0 0;transform:rotate(-90deg) scaleX(1.028)">20.10.</div>
<div class="t k" style="left:1252.32px;top:377.11px;font-size:10.5px;font-weight:bold;color:#f4f9d8;transform:scaleX(0.8800);">44</div>
<div class="t k" style="left:1252.0px;top:429.0px;font-size:10.5px;font-weight:bold;color:#f4f9d8;transform-origin:0 0;transform:rotate(-90deg) scaleX(1.028)">27.10.</div>
<div class="t k" style="left:1287.42px;top:377.11px;font-size:10.5px;font-weight:bold;color:#f4f9d8;transform:scaleX(0.8800);">45</div>
<div class="t k" style="left:1287.0px;top:429.0px;font-size:10.5px;font-weight:bold;color:#f4f9d8;transform-origin:0 0;transform:rotate(-90deg) scaleX(1.028)">03.11.</div>
<div class="t k" style="left:1322.46px;top:377.11px;font-size:10.5px;font-weight:bold;color:#f4f9d8;transform:scaleX(0.8800);">46</div>
<div class="t k" style="left:1322.0px;top:429.0px;font-size:10.5px;font-weight:bold;color:#f4f9d8;transform-origin:0 0;transform:rotate(-90deg) scaleX(1.028)">10.11.</div>
<div class="t k" style="left:1357.49px;top:377.11px;font-size:10.5px;font-weight:bold;color:#f4f9d8;transform:scaleX(0.8800);">47</div>
<div class="t k" style="left:1357.0px;top:429.0px;font-size:10.5px;font-weight:bold;color:#f4f9d8;transform-origin:0 0;transform:rotate(-90deg) scaleX(1.028)">17.11.</div>
<div class="t k" style="left:1392.43px;top:377.11px;font-size:10.5px;font-weight:bold;color:#f4f9d8;transform:scaleX(0.8800);">48</div>
<div class="t k" style="left:1392.0px;top:429.0px;font-size:10.5px;font-weight:bold;color:#f4f9d8;transform-origin:0 0;transform:rotate(-90deg) scaleX(1.028)">24.11.</div>
<div class="t k" style="left:1427.46px;top:377.11px;font-size:10.5px;font-weight:bold;color:#f4f9d8;transform:scaleX(0.8800);">49</div>
<div class="t k" style="left:1427.0px;top:429.0px;font-size:10.5px;font-weight:bold;color:#f4f9d8;transform-origin:0 0;transform:rotate(-90deg) scaleX(1.028)">01.12.</div>
<div class="t k" style="left:1462.41px;top:377.11px;font-size:10.5px;font-weight:bold;color:#f4f9d8;transform:scaleX(0.8800);">50</div>
<div class="t k" style="left:1462.0px;top:429.0px;font-size:10.5px;font-weight:bold;color:#f4f9d8;transform-origin:0 0;transform:rotate(-90deg) scaleX(1.028)">08.12.</div>
<div class="t k" style="left:1497.35px;top:377.11px;font-size:10.5px;font-weight:bold;color:#f4f9d8;transform:scaleX(0.8800);">51</div>
<div class="t k" style="left:1497.0px;top:429.0px;font-size:10.5px;font-weight:bold;color:#f4f9d8;transform-origin:0 0;transform:rotate(-90deg) scaleX(1.028)">15.12.</div>
<div class="t k" style="left:1532.40px;top:377.11px;font-size:10.5px;font-weight:bold;color:#f4f9d8;transform:scaleX(0.8800);">52</div>
<div class="t k" style="left:1532.0px;top:429.0px;font-size:10.5px;font-weight:bold;color:#f4f9d8;transform-origin:0 0;transform:rotate(-90deg) scaleX(1.028)">22.12.</div>
<div class="t k" style="left:1569.77px;top:377.11px;font-size:10.5px;font-weight:bold;color:#f4f9d8;transform:scaleX(0.8800);">1</div>
<div class="t k" style="left:1567.0px;top:429.0px;font-size:10.5px;font-weight:bold;color:#f4f9d8;transform-origin:0 0;transform:rotate(-90deg) scaleX(1.028)">29.12.</div>
<div class="a" style="left:825px;top:195px;width:1px;height:741px;background:#9a9a9a;"></div>
<div class="t k" style="left:27.66px;top:445.92px;font-size:11.9px;font-weight:bold;color:#000;transform:scaleX(0.9821);">1.</div>
<div class="t k" style="left:71.53px;top:445.92px;font-size:11.9px;font-weight:bold;color:#000;transform:scaleX(0.9716);">Konzept Studie erstellen</div>
<div class="t k" style="left:439.03px;top:445.92px;font-size:11.9px;font-weight:bold;color:#000;transform:scaleX(0.9926);">116 h</div>
<div class="t k" style="left:491.71px;top:445.92px;font-size:11.9px;font-weight:bold;color:#000;transform:scaleX(0.9926);">02.06.14</div>
<div class="t k" style="left:586.14px;top:445.92px;font-size:11.9px;font-weight:bold;color:#000;transform:scaleX(0.9926);">30 D</div>
<div class="t k" style="left:27.66px;top:469.92px;font-size:11.9px;font-weight:bold;color:#000;transform:scaleX(0.9821);">1.01</div>
<div class="t k" style="left:72.01px;top:469.92px;font-size:11.9px;font-weight:bold;color:#000;transform:scaleX(0.9716);">Aufwand Schätzung</div>
<div class="t k" style="left:452.17px;top:469.92px;font-size:11.9px;font-weight:bold;color:#000;transform:scaleX(0.9926);">5 h</div>
<div class="t k" style="left:491.57px;top:469.92px;font-size:11.9px;font-weight:bold;color:#000;transform:scaleX(0.9926);">10.06.14</div>
<div class="t k" style="left:589.47px;top:469.92px;font-size:11.9px;font-weight:bold;color:#000;transform:scaleX(0.9926);">4 D</div>
<div class="t k" style="left:27.66px;top:493.92px;font-size:11.9px;font-weight:bold;color:#000;transform:scaleX(0.9821);">1.02</div>
<div class="t k" style="left:71.97px;top:493.92px;font-size:11.9px;font-weight:bold;color:#000;transform:scaleX(0.9716);">Skizzen erstellen</div>
<div class="t k" style="left:445.60px;top:493.92px;font-size:11.9px;font-weight:bold;color:#000;transform:scaleX(0.9926);">45 h</div>
<div class="t k" style="left:491.71px;top:493.92px;font-size:11.9px;font-weight:bold;color:#000;transform:scaleX(0.9926);">02.06.14</div>
<div class="t k" style="left:586.14px;top:493.92px;font-size:11.9px;font-weight:bold;color:#000;transform:scaleX(0.9926);">30 D</div>
<div class="t k" style="left:27.66px;top:517.92px;font-size:11.9px;font-weight:bold;color:#000;transform:scaleX(0.9821);">1.03</div>
<div class="t k" style="left:71.53px;top:517.92px;font-size:11.9px;font-weight:bold;color:#000;transform:scaleX(0.9716);">Konkurrenz- &amp; Martanalyse</div>
<div class="t k" style="left:452.17px;top:517.92px;font-size:11.9px;font-weight:bold;color:#000;transform:scaleX(0.9926);">6 h</div>
<div class="t k" style="left:491.71px;top:517.92px;font-size:11.9px;font-weight:bold;color:#000;transform:scaleX(0.9926);">02.06.14</div>
<div class="t k" style="left:586.07px;top:517.92px;font-size:11.9px;font-weight:bold;color:#000;transform:scaleX(0.9926);">20 D</div>
<div class="t k" style="left:27.66px;top:541.92px;font-size:11.9px;font-weight:bold;color:#000;transform:scaleX(0.9821);">1.04</div>
<div class="t k" style="left:71.53px;top:541.92px;font-size:11.9px;font-weight:bold;color:#000;transform:scaleX(0.9716);">Einkaufsteile suchen</div>
<div class="t k" style="left:452.17px;top:541.92px;font-size:11.9px;font-weight:bold;color:#000;transform:scaleX(0.9926);">4 h</div>
<div class="t k" style="left:491.71px;top:541.92px;font-size:11.9px;font-weight:bold;color:#000;transform:scaleX(0.9926);">02.06.14</div>
<div class="t k" style="left:586.07px;top:541.92px;font-size:11.9px;font-weight:bold;color:#000;transform:scaleX(0.9926);">25 D</div>
<div class="t k" style="left:27.66px;top:565.92px;font-size:11.9px;font-weight:bold;color:#000;transform:scaleX(0.9821);">1.05</div>
<div class="t k" style="left:72.03px;top:565.92px;font-size:11.9px;font-weight:bold;color:#000;transform:scaleX(0.9716);">3D Modell erstellen</div>
<div class="t k" style="left:445.60px;top:565.92px;font-size:11.9px;font-weight:bold;color:#000;transform:scaleX(0.9926);">50 h</div>
<div class="t k" style="left:491.71px;top:565.92px;font-size:11.9px;font-weight:bold;color:#000;transform:scaleX(0.9926);">02.06.14</div>
<div class="t k" style="left:586.14px;top:565.92px;font-size:11.9px;font-weight:bold;color:#000;transform:scaleX(0.9926);">30 D</div>
<div class="t k" style="left:27.66px;top:589.92px;font-size:11.9px;font-weight:bold;color:#000;transform:scaleX(0.9821);">1.06</div>
<div class="t k" style="left:71.53px;top:589.92px;font-size:11.9px;font-weight:bold;color:#000;transform:scaleX(0.9716);">Mögliche Lieferanten evaluieren</div>
<div class="t k" style="left:452.17px;top:589.92px;font-size:11.9px;font-weight:bold;color:#000;transform:scaleX(0.9926);">6 h</div>
<div class="t k" style="left:491.74px;top:589.92px;font-size:11.9px;font-weight:bold;color:#000;transform:scaleX(0.9926);">27.06.14</div>
<div class="t k" style="left:585.90px;top:589.92px;font-size:11.9px;font-weight:bold;color:#000;transform:scaleX(0.9926);">10 D</div>
<div class="t k" style="left:27.99px;top:613.92px;font-size:11.9px;font-weight:bold;color:#000;transform:scaleX(0.9821);">2.</div>
<div class="t k" style="left:71.83px;top:613.92px;font-size:11.9px;font-weight:bold;color:#000;transform:scaleX(0.9716);">Grobkonzept erstellen</div>
<div class="t k" style="left:445.60px;top:613.92px;font-size:11.9px;font-weight:bold;color:#000;transform:scaleX(0.9926);">76 h</div>
<div class="t k" style="left:491.57px;top:613.92px;font-size:11.9px;font-weight:bold;color:#000;transform:scaleX(0.9926);">11.07.14</div>
<div class="t k" style="left:586.07px;top:613.92px;font-size:11.9px;font-weight:bold;color:#000;transform:scaleX(0.9926);">29 D</div>
<div class="t k" style="left:27.99px;top:637.92px;font-size:11.9px;font-weight:bold;color:#000;transform:scaleX(0.9821);">2.01</div>
<div class="t k" style="left:72.03px;top:637.92px;font-size:11.9px;font-weight:bold;color:#000;transform:scaleX(0.9716);">3D Modelle detailieren</div>
<div class="t k" style="left:445.60px;top:637.92px;font-size:11.9px;font-weight:bold;color:#000;transform:scaleX(0.9926);">48 h</div>
<div class="t k" style="left:491.57px;top:637.92px;font-size:11.9px;font-weight:bold;color:#000;transform:scaleX(0.9926);">11.07.14</div>
<div class="t k" style="left:585.90px;top:637.92px;font-size:11.9px;font-weight:bold;color:#000;transform:scaleX(0.9926);">15 D</div>
<div class="t k" style="left:27.99px;top:661.92px;font-size:11.9px;font-weight:bold;color:#000;transform:scaleX(0.9821);">2.02</div>
<div class="t k" style="left:71.53px;top:661.92px;font-size:11.9px;font-weight:bold;color:#000;transform:scaleX(0.9716);">Einkaufsteile anfragen</div>
<div class="t k" style="left:452.17px;top:661.92px;font-size:11.9px;font-weight:bold;color:#000;transform:scaleX(0.9926);">4 h</div>
<div class="t k" style="left:491.57px;top:661.92px;font-size:11.9px;font-weight:bold;color:#000;transform:scaleX(0.9926);">11.07.14</div>
<div class="t k" style="left:589.38px;top:661.92px;font-size:11.9px;font-weight:bold;color:#000;transform:scaleX(0.9926);">5 D</div>
<div class="t k" style="left:27.99px;top:685.92px;font-size:11.9px;font-weight:bold;color:#000;transform:scaleX(0.9821);">2.03</div>
<div class="t k" style="left:71.96px;top:685.92px;font-size:11.9px;font-weight:bold;color:#000;transform:scaleX(0.9716);">Zeichnungen erstellen</div>
<div class="t k" style="left:445.60px;top:685.92px;font-size:11.9px;font-weight:bold;color:#000;transform:scaleX(0.9926);">10 h</div>
<div class="t k" style="left:491.81px;top:685.92px;font-size:11.9px;font-weight:bold;color:#000;transform:scaleX(0.9926);">31.07.14</div>
<div class="t k" style="left:589.38px;top:685.92px;font-size:11.9px;font-weight:bold;color:#000;transform:scaleX(0.9926);">5 D</div>
<div class="t k" style="left:27.99px;top:709.92px;font-size:11.9px;font-weight:bold;color:#000;transform:scaleX(0.9821);">2.04</div>
<div class="t k" style="left:71.83px;top:709.92px;font-size:11.9px;font-weight:bold;color:#000;transform:scaleX(0.9716);">Offerte für Fertigung einholen</div>
<div class="t k" style="left:452.17px;top:709.92px;font-size:11.9px;font-weight:bold;color:#000;transform:scaleX(0.9926);">4 h</div>
<div class="t k" style="left:491.71px;top:709.92px;font-size:11.9px;font-weight:bold;color:#000;transform:scaleX(0.9926);">06.08.14</div>
<div class="t k" style="left:585.90px;top:709.92px;font-size:11.9px;font-weight:bold;color:#000;transform:scaleX(0.9926);">10 D</div>
<div class="t k" style="left:27.99px;top:733.92px;font-size:11.9px;font-weight:bold;color:#000;transform:scaleX(0.9821);">2.05</div>
<div class="t k" style="left:71.83px;top:733.92px;font-size:11.9px;font-weight:bold;color:#000;transform:scaleX(0.9716);">Offerten vergleichen</div>
<div class="t k" style="left:452.17px;top:733.92px;font-size:11.9px;font-weight:bold;color:#000;transform:scaleX(0.9926);">2 h</div>
<div class="t k" style="left:491.57px;top:733.92px;font-size:11.9px;font-weight:bold;color:#000;transform:scaleX(0.9926);">19.08.14</div>
<div class="t k" style="left:589.35px;top:733.92px;font-size:11.9px;font-weight:bold;color:#000;transform:scaleX(0.9926);">2 D</div>
<div class="t k" style="left:652.22px;top:733.92px;font-size:11.9px;font-weight:bold;color:#000;transform:scaleX(1.0535);">20.08.14</div>
<div class="t k" style="left:750.01px;top:733.92px;font-size:11.9px;font-weight:bold;color:#000;transform:scaleX(1.0554);">100%</div>
<svg style="left:810px;top:731.5px" width="13" height="13"><circle cx="6.5" cy="6.5" r="5.8" fill="url(#ckg)" stroke="#2f6450" stroke-width="0.8"/><path d="M3.6 6.6l2 2.2l3.8-4.2" fill="none" stroke="#c8f5dc" stroke-width="1.5"/></svg>
<div class="t k" style="left:27.99px;top:757.92px;font-size:11.9px;font-weight:bold;color:#000;transform:scaleX(0.9821);">2.06</div>
<div class="t k" style="left:71.97px;top:757.92px;font-size:11.9px;font-weight:bold;color:#000;transform:scaleX(0.9716);">Schätzung Herstellkosten und Montagekosten</div>
<div class="t k" style="left:452.17px;top:757.92px;font-size:11.9px;font-weight:bold;color:#000;transform:scaleX(0.9926);">8 h</div>
<div class="t k" style="left:491.71px;top:757.92px;font-size:11.9px;font-weight:bold;color:#000;transform:scaleX(0.9926);">06.08.14</div>
<div class="t k" style="left:589.38px;top:757.92px;font-size:11.9px;font-weight:bold;color:#000;transform:scaleX(0.9926);">5 D</div>
<div class="t k" style="left:651.85px;top:757.92px;font-size:11.9px;font-weight:bold;color:#000;transform:scaleX(1.0613);">12.08.14</div>
<div class="t k" style="left:750.01px;top:757.92px;font-size:11.9px;font-weight:bold;color:#000;transform:scaleX(1.0554);">100%</div>
<svg style="left:810px;top:755.5px" width="13" height="13"><circle cx="6.5" cy="6.5" r="5.8" fill="url(#ckg)" stroke="#2f6450" stroke-width="0.8"/><path d="M3.6 6.6l2 2.2l3.8-4.2" fill="none" stroke="#c8f5dc" stroke-width="1.5"/></svg>
<div class="t k" style="left:28.13px;top:782.42px;font-size:11.9px;font-weight:bold;color:#000;transform:scaleX(0.9821);">3.</div>
<div class="t k" style="left:71.53px;top:782.42px;font-size:11.9px;font-weight:bold;color:#000;transform:scaleX(0.9716);">Detailkonzept erstellen</div>
<div class="t k" style="left:445.60px;top:782.42px;font-size:11.9px;font-weight:bold;color:#000;transform:scaleX(0.9926);">58 h</div>
<div class="t k" style="left:491.74px;top:782.42px;font-size:11.9px;font-weight:bold;color:#000;transform:scaleX(0.9926);">20.08.14</div>
<div class="t k" style="left:586.14px;top:782.42px;font-size:11.9px;font-weight:bold;color:#000;transform:scaleX(0.9926);">31 D</div>
<div class="t k" style="left:652.15px;top:782.42px;font-size:11.9px;font-weight:bold;color:#000;transform:scaleX(1.0549);">01.10.14</div>
<div class="t k" style="left:750.01px;top:782.42px;font-size:11.9px;font-weight:bold;color:#000;transform:scaleX(1.0554);">100%</div>
<svg style="left:810px;top:780.5px" width="13" height="13"><circle cx="6.5" cy="6.5" r="5.8" fill="url(#ckg)" stroke="#2f6450" stroke-width="0.8"/><path d="M3.6 6.6l2 2.2l3.8-4.2" fill="none" stroke="#c8f5dc" stroke-width="1.5"/></svg>
<div class="t k" style="left:28.13px;top:806.92px;font-size:11.9px;font-weight:bold;color:#000;transform:scaleX(0.9821);">3.01</div>
<div class="t k" style="left:71.53px;top:806.92px;font-size:11.9px;font-weight:bold;color:#000;transform:scaleX(0.9716);">Besprechnung Fertigungsteile mit Lieferant</div>
<div class="t k" style="left:452.17px;top:806.92px;font-size:11.9px;font-weight:bold;color:#000;transform:scaleX(0.9926);">8 h</div>
<div class="t k" style="left:491.74px;top:806.92px;font-size:11.9px;font-weight:bold;color:#000;transform:scaleX(0.9926);">20.08.14</div>
<div class="t k" style="left:589.38px;top:806.92px;font-size:11.9px;font-weight:bold;color:#000;transform:scaleX(0.9926);">5 D</div>
<div class="t k" style="left:652.22px;top:806.92px;font-size:11.9px;font-weight:bold;color:#000;transform:scaleX(1.0535);">26.08.14</div>
<div class="t k" style="left:750.01px;top:806.92px;font-size:11.9px;font-weight:bold;color:#000;transform:scaleX(1.0554);">100%</div>
<svg style="left:810px;top:803.5px" width="13" height="13"><circle cx="6.5" cy="6.5" r="5.8" fill="url(#ckg)" stroke="#2f6450" stroke-width="0.8"/><path d="M3.6 6.6l2 2.2l3.8-4.2" fill="none" stroke="#c8f5dc" stroke-width="1.5"/></svg>
<div class="t k" style="left:28.13px;top:829.92px;font-size:11.9px;font-weight:bold;color:#000;transform:scaleX(0.9821);">3.02</div>
<div class="t k" style="left:71.53px;top:829.92px;font-size:11.9px;font-weight:bold;color:#000;transform:scaleX(0.9716);">Redesign Fertigungsteile/Briefkasten</div>
<div class="t k" style="left:445.60px;top:829.92px;font-size:11.9px;font-weight:bold;color:#000;transform:scaleX(0.9926);">24 h</div>
<div class="t k" style="left:491.74px;top:829.92px;font-size:11.9px;font-weight:bold;color:#000;transform:scaleX(0.9926);">26.08.14</div>
<div class="t k" style="left:585.90px;top:829.92px;font-size:11.9px;font-weight:bold;color:#000;transform:scaleX(0.9926);">10 D</div>
<div class="t k" style="left:652.15px;top:829.92px;font-size:11.9px;font-weight:bold;color:#000;transform:scaleX(1.0549);">08.09.14</div>
<div class="t k" style="left:750.01px;top:829.92px;font-size:11.9px;font-weight:bold;color:#000;transform:scaleX(1.0554);">100%</div>
<svg style="left:810px;top:827.0px" width="13" height="13"><circle cx="6.5" cy="6.5" r="5.8" fill="url(#ckg)" stroke="#2f6450" stroke-width="0.8"/><path d="M3.6 6.6l2 2.2l3.8-4.2" fill="none" stroke="#c8f5dc" stroke-width="1.5"/></svg>
<div class="t k" style="left:28.13px;top:852.92px;font-size:11.9px;font-weight:bold;color:#000;transform:scaleX(0.9821);">3.03</div>
<div class="t k" style="left:71.96px;top:852.92px;font-size:11.9px;font-weight:bold;color:#000;transform:scaleX(0.9716);">Zeichnungen überarbeiten</div>
<div class="t k" style="left:452.17px;top:852.92px;font-size:11.9px;font-weight:bold;color:#000;transform:scaleX(0.9926);">4 h</div>
<div class="t k" style="left:491.71px;top:852.92px;font-size:11.9px;font-weight:bold;color:#000;transform:scaleX(0.9926);">08.09.14</div>
<div class="t k" style="left:589.38px;top:852.92px;font-size:11.9px;font-weight:bold;color:#000;transform:scaleX(0.9926);">5 D</div>
<div class="t k" style="left:651.85px;top:852.92px;font-size:11.9px;font-weight:bold;color:#000;transform:scaleX(1.0613);">12.09.14</div>
<div class="t k" style="left:750.01px;top:852.92px;font-size:11.9px;font-weight:bold;color:#000;transform:scaleX(1.0554);">100%</div>
<svg style="left:810px;top:850.0px" width="13" height="13"><circle cx="6.5" cy="6.5" r="5.8" fill="url(#ckg)" stroke="#2f6450" stroke-width="0.8"/><path d="M3.6 6.6l2 2.2l3.8-4.2" fill="none" stroke="#c8f5dc" stroke-width="1.5"/></svg>
<div class="t k" style="left:28.13px;top:875.92px;font-size:11.9px;font-weight:bold;color:#000;transform:scaleX(0.9821);">3.04</div>
<div class="t k" style="left:71.53px;top:875.92px;font-size:11.9px;font-weight:bold;color:#000;transform:scaleX(0.9716);">Farben definieren</div>
<div class="t k" style="left:452.17px;top:875.92px;font-size:11.9px;font-weight:bold;color:#000;transform:scaleX(0.9926);">8 h</div>
<div class="t k" style="left:491.71px;top:875.92px;font-size:11.9px;font-weight:bold;color:#000;transform:scaleX(0.9926);">08.09.14</div>
<div class="t k" style="left:589.38px;top:875.92px;font-size:11.9px;font-weight:bold;color:#000;transform:scaleX(0.9926);">5 D</div>
<div class="t k" style="left:651.85px;top:875.92px;font-size:11.9px;font-weight:bold;color:#000;transform:scaleX(1.0613);">12.09.14</div>
<div class="t k" style="left:750.01px;top:875.92px;font-size:11.9px;font-weight:bold;color:#000;transform:scaleX(1.0554);">100%</div>
<svg style="left:810px;top:873.0px" width="13" height="13"><circle cx="6.5" cy="6.5" r="5.8" fill="url(#ckg)" stroke="#2f6450" stroke-width="0.8"/><path d="M3.6 6.6l2 2.2l3.8-4.2" fill="none" stroke="#c8f5dc" stroke-width="1.5"/></svg>
<div class="t k" style="left:28.13px;top:898.92px;font-size:11.9px;font-weight:bold;color:#000;transform:scaleX(0.9821);">3.05</div>
<div class="t k" style="left:71.83px;top:898.92px;font-size:11.9px;font-weight:bold;color:#000;transform:scaleX(0.9716);">Offerte für Fertigung einholen</div>
<div class="t k" style="left:452.17px;top:898.92px;font-size:11.9px;font-weight:bold;color:#000;transform:scaleX(0.9926);">8 h</div>
<div class="t k" style="left:491.57px;top:898.92px;font-size:11.9px;font-weight:bold;color:#000;transform:scaleX(0.9926);">12.09.14</div>
<div class="t k" style="left:585.90px;top:898.92px;font-size:11.9px;font-weight:bold;color:#000;transform:scaleX(0.9926);">10 D</div>
<div class="t k" style="left:652.22px;top:898.92px;font-size:11.9px;font-weight:bold;color:#000;transform:scaleX(1.0535);">25.09.14</div>
<div class="t k" style="left:750.01px;top:898.92px;font-size:11.9px;font-weight:bold;color:#000;transform:scaleX(1.0554);">100%</div>
<svg style="left:810px;top:896.0px" width="13" height="13"><circle cx="6.5" cy="6.5" r="5.8" fill="url(#ckg)" stroke="#2f6450" stroke-width="0.8"/><path d="M3.6 6.6l2 2.2l3.8-4.2" fill="none" stroke="#c8f5dc" stroke-width="1.5"/></svg>
<div class="t k" style="left:28.13px;top:921.92px;font-size:11.9px;font-weight:bold;color:#000;transform:scaleX(0.9821);">3.06</div>
<div class="t k" style="left:71.83px;top:921.92px;font-size:11.9px;font-weight:bold;color:#000;transform:scaleX(0.9716);">Offerten vergleichen</div>
<div class="t k" style="left:452.17px;top:921.92px;font-size:11.9px;font-weight:bold;color:#000;transform:scaleX(0.9926);">2 h</div>
<div class="t k" style="left:491.74px;top:921.92px;font-size:11.9px;font-weight:bold;color:#000;transform:scaleX(0.9926);">25.09.14</div>
<div class="t k" style="left:589.35px;top:921.92px;font-size:11.9px;font-weight:bold;color:#000;transform:scaleX(0.9926);">2 D</div>
<div class="t k" style="left:652.22px;top:921.92px;font-size:11.9px;font-weight:bold;color:#000;transform:scaleX(1.0535);">26.09.14</div>
<div class="t k" style="left:750.01px;top:921.92px;font-size:11.9px;font-weight:bold;color:#000;transform:scaleX(1.0554);">100%</div>
<svg style="left:810px;top:919.0px" width="13" height="13"><circle cx="6.5" cy="6.5" r="5.8" fill="url(#ckg)" stroke="#2f6450" stroke-width="0.8"/><path d="M3.6 6.6l2 2.2l3.8-4.2" fill="none" stroke="#c8f5dc" stroke-width="1.5"/></svg>
<div class="a" style="left:900px;top:728px;width:10px;height:21px;background:#1e2000;"></div>
<div class="a" style="left:835px;top:752px;width:35px;height:21px;background:#1e2000;"></div>
<div class="a" style="left:905px;top:778px;width:215px;height:19px;background:#1e2000;"></div>
<div class="a" style="left:905px;top:800px;width:35px;height:21px;background:#1e2000;"></div>
<div class="a" style="left:935px;top:824px;width:70px;height:20px;background:#1e2000;"></div>
<div class="a" style="left:1000px;top:847px;width:25px;height:20px;background:#1e2000;"></div>
<div class="a" style="left:1000px;top:870px;width:25px;height:20px;background:#1e2000;"></div>
<div class="a" style="left:1020px;top:893px;width:70px;height:20px;background:#1e2000;"></div>
<div class="a" style="left:1085px;top:916px;width:10px;height:20px;background:#1e2000;"></div>
<svg style="left:472px;top:440px" width="5" height="5"><path d="M0 0h4.5L0 4.5z" fill="#217346"/></svg>
<svg style="left:557px;top:440px" width="5" height="5"><path d="M0 0h4.5L0 4.5z" fill="#217346"/></svg>
<svg style="left:472px;top:512px" width="5" height="5"><path d="M0 0h4.5L0 4.5z" fill="#217346"/></svg>
<svg style="left:472px;top:536px" width="5" height="5"><path d="M0 0h4.5L0 4.5z" fill="#217346"/></svg>
<svg style="left:472px;top:560px" width="5" height="5"><path d="M0 0h4.5L0 4.5z" fill="#217346"/></svg>
<svg style="left:472px;top:584px" width="5" height="5"><path d="M0 0h4.5L0 4.5z" fill="#217346"/></svg>
<svg style="left:472px;top:632px" width="5" height="5"><path d="M0 0h4.5L0 4.5z" fill="#217346"/></svg>
<svg style="left:472px;top:656px" width="5" height="5"><path d="M0 0h4.5L0 4.5z" fill="#217346"/></svg>
<svg style="left:472px;top:680px" width="5" height="5"><path d="M0 0h4.5L0 4.5z" fill="#217346"/></svg>
<svg style="left:472px;top:704px" width="5" height="5"><path d="M0 0h4.5L0 4.5z" fill="#217346"/></svg>
<svg style="left:472px;top:728px" width="5" height="5"><path d="M0 0h4.5L0 4.5z" fill="#217346"/></svg>
<svg style="left:472px;top:752px" width="5" height="5"><path d="M0 0h4.5L0 4.5z" fill="#217346"/></svg>
<svg style="left:386px;top:608px" width="5" height="5"><path d="M0 0h4.5L0 4.5z" fill="#217346"/></svg>
<svg style="left:386px;top:777px" width="5" height="5"><path d="M0 0h4.5L0 4.5z" fill="#217346"/></svg>
<svg style="left:716px;top:777px" width="5" height="5"><path d="M0 0h4.5L0 4.5z" fill="#217346"/></svg>
<div class="a" style="left:385.5px;top:438.5px;width:86px;height:24.5px;border:2px solid #217346;"></div>
<div class="a" style="left:468px;top:460px;width:6px;height:6px;background:#217346;border:1px solid #fff;"></div>
<div class="a" style="left:472.5px;top:445px;width:15.5px;height:15px;background:#fafafa;border:1px solid #d8d8d8;"></div>
<svg style="left:472.5px;top:445px" width="15" height="15"><path d="M4 6h7l-3.5 4z" fill="#555"/></svg>
<div class="a" style="left:617px;top:266px;width:604px;height:464px;box-shadow:0 0 12px 3px rgba(0,0,0,0.22)"></div>
<div class="a" style="left:617px;top:266px;width:604px;height:464px;background:#f0f0f0;border:1px solid #7fa6aa;"></div>
<div class="a" style="left:618px;top:267px;width:602px;height:30px;background:#ffffff;"></div>
<div class="t" style="left:626.12px;top:276.22px;font-size:12.5px;color:#1a1a1a;transform:scaleX(0.9696);">Zellen formatieren</div>
<div class="t" style="left:1147.70px;top:274.99px;font-size:13px;color:#1a1a1a;transform:scaleX(1.1264);">?</div>
<svg style="left:1191px;top:275px" width="12" height="12"><path d="M1 1l10 10M11 1l-10 10" stroke="#111" stroke-width="1.2"/></svg>
<div class="a" style="left:624.5px;top:325px;width:587px;height:365.5px;background:#ffffff;border:1px solid #d9d9d9;"></div>
<div class="a" style="left:624.8px;top:304.5px;width:54.9px;height:22px;background:#ffffff;border:1px solid #d9d9d9;border-bottom:none;"></div>
<div class="t" style="left:632.63px;top:310.22px;font-size:12.5px;color:#111;transform:scaleX(0.9375);">Zahlen</div>
<div class="a" style="left:679.7px;top:306.5px;width:78.7px;height:19px;background:#f0f0f0;border:1px solid #d9d9d9;border-bottom:none;"></div>
<div class="t" style="left:687.48px;top:310.42px;font-size:12.5px;color:#111;transform:scaleX(0.9589);">Ausrichtung</div>
<div class="a" style="left:758.4px;top:306.5px;width:53.6px;height:19px;background:#f0f0f0;border:1px solid #d9d9d9;border-bottom:none;border-left:none;"></div>
<div class="t" style="left:768.47px;top:310.42px;font-size:12.5px;color:#111;transform:scaleX(0.9320);">Schrift</div>
<div class="a" style="left:812px;top:306.5px;width:60.5px;height:19px;background:#f0f0f0;border:1px solid #d9d9d9;border-bottom:none;border-left:none;"></div>
<div class="t" style="left:821.47px;top:310.42px;font-size:12.5px;color:#111;transform:scaleX(0.9029);">Rahmen</div>
<div class="a" style="left:872.5px;top:306.5px;width:66.1px;height:19px;background:#f0f0f0;border:1px solid #d9d9d9;border-bottom:none;border-left:none;"></div>
<div class="t" style="left:882.48px;top:310.42px;font-size:12.5px;color:#111;transform:scaleX(0.9528);">Ausfüllen</div>
<div class="a" style="left:938.6px;top:306.5px;width:52.5px;height:19px;background:#f0f0f0;border:1px solid #d9d9d9;border-bottom:none;border-left:none;"></div>
<div class="t" style="left:948.88px;top:310.42px;font-size:12.5px;color:#111;transform:scaleX(0.9129);">Schutz</div>
<div class="t" style="left:632.04px;top:336.14px;font-size:12px;color:#111;transform:scaleX(0.9768);">Kategorie:</div>
<div class="a" style="left:633px;top:348px;width:7px;height:1px;background:#111;"></div>
<div class="a" style="left:633.2px;top:351.2px;width:121.5px;height:250px;background:#ffffff;border:1px solid #828790;"></div>
<div class="a" style="left:736.4px;top:352px;width:17.5px;height:248px;background:#f0f0f0;"></div>
<svg style="left:740px;top:358px" width="10" height="8"><path d="M1 6l4-4l4 4" fill="none" stroke="#bcbcbc" stroke-width="1.2"/></svg>
<svg style="left:740px;top:587px" width="10" height="8"><path d="M1 2l4 4l4-4" fill="none" stroke="#bcbcbc" stroke-width="1.2"/></svg>
<div class="a" style="left:635.2px;top:496.2px;width:100.4px;height:10.6px;background:#3a8ee6;"></div>
<div class="t" style="left:636.97px;top:354.04px;font-size:12px;color:#111;transform:scaleX(0.9792);">Standard</div>
<div class="t" style="left:637.13px;top:366.94px;font-size:12px;color:#111;transform:scaleX(0.9792);">Zahl</div>
<div class="t" style="left:637.45px;top:379.84px;font-size:12px;color:#111;transform:scaleX(1.0174);">Währung</div>
<div class="t" style="left:636.49px;top:392.74px;font-size:12px;color:#111;transform:scaleX(1.0252);">Buchhaltung</div>
<div class="t" style="left:636.51px;top:405.64px;font-size:12px;color:#111;">Datum</div>
<div class="t" style="left:636.58px;top:418.54px;font-size:12px;color:#111;transform:scaleX(0.9920);">Uhrzeit</div>
<div class="t" style="left:636.56px;top:431.44px;font-size:12px;color:#111;transform:scaleX(0.9582);">Prozent</div>
<div class="t" style="left:636.51px;top:444.34px;font-size:12px;color:#111;">Bruch</div>
<div class="t" style="left:637.45px;top:457.24px;font-size:12px;color:#111;transform:scaleX(0.9450);">Wissenschaft</div>
<div class="t" style="left:637.27px;top:470.14px;font-size:12px;color:#111;transform:scaleX(0.8660);">Text</div>
<div class="t" style="left:636.96px;top:483.04px;font-size:12px;color:#111;transform:scaleX(0.9851);">Sonderformat</div>
<div class="t" style="left:636.51px;top:495.94px;font-size:12px;color:#f5f9ff;transform:scaleX(1.0050);">Benutzerdefiniert</div>
<div class="a" style="left:764.2px;top:357.1px;width:439px;height:30.7px;border:1px solid #dcdcdc;"></div>
<div class="a" style="left:767px;top:354px;width:45px;height:8px;background:#ffffff;"></div>
<div class="t" style="left:769.03px;top:351.84px;font-size:12px;color:#111;transform:scaleX(0.9842);">Beispiel</div>
<div class="t" style="left:772.74px;top:371.14px;font-size:12px;color:#111;transform:scaleX(0.9387);">116 h</div>
<div class="t" style="left:763.98px;top:396.44px;font-size:12px;color:#111;transform:scaleX(0.8192);">Typ:</div>
<div class="a" style="left:764.2px;top:408.5px;width:6.8px;height:1px;background:#111;"></div>
<div class="a" style="left:764.2px;top:410.1px;width:440.5px;height:20px;background:#ffffff;border:1px solid #7a7a7a;border-bottom:2px solid #6e6e6e;"></div>
<div class="a" style="left:768px;top:413.2px;width:24.5px;height:12.6px;background:#c8c8c8;"></div>
<div class="t" style="left:768.45px;top:413.84px;font-size:12px;color:#111;transform:scaleX(0.9607);">#'  h'</div>
<div class="a" style="left:764.4px;top:430.1px;width:440px;height:146.5px;background:#ffffff;border:1px solid #828790;border-top:none;"></div>
<div class="a" style="left:1185.5px;top:431px;width:18px;height:144.5px;background:#f0f0f0;"></div>
<div class="a" style="left:1187.5px;top:541.4px;width:14px;height:15.4px;background:#c2c2c2;"></div>
<svg style="left:1189px;top:437px" width="10" height="8"><path d="M1 6l4-4l4 4" fill="none" stroke="#444" stroke-width="1.3"/></svg>
<svg style="left:1189px;top:562px" width="10" height="8"><path d="M1 2l4 4l4-4" fill="none" stroke="#444" stroke-width="1.3"/></svg>
<div class="t" style="left:768.22px;top:431.94px;font-size:12px;color:#111;transform:scaleX(0.9325);">"8 W. [ "0" D ]"</div>
<div class="t" style="left:768.22px;top:444.94px;font-size:12px;color:#111;transform:scaleX(0.9325);">"9 W. [ "0" D ]"</div>
<div class="t" style="left:768.23px;top:457.94px;font-size:12px;color:#111;transform:scaleX(0.9189);">"10 W. [ "0" D ]"</div>
<div class="t" style="left:768.23px;top:470.94px;font-size:12px;color:#111;transform:scaleX(0.9189);">"11 W. [ "0" D ]"</div>
<div class="t" style="left:768.23px;top:483.94px;font-size:12px;color:#111;transform:scaleX(0.9189);">"12 W. [ "0" D ]"</div>
<div class="t" style="left:768.23px;top:496.94px;font-size:12px;color:#111;transform:scaleX(0.9189);">"13 W. [ "0" D ]"</div>
<div class="t" style="left:768.23px;top:509.94px;font-size:12px;color:#111;transform:scaleX(0.9189);">"14 W. [ "0" D ]"</div>
<div class="t" style="left:768.23px;top:522.94px;font-size:12px;color:#111;transform:scaleX(0.9189);">"15 W. [ "0" D ]"</div>
<div class="t" style="left:768.23px;top:535.94px;font-size:12px;color:#111;transform:scaleX(0.9189);">"16 W. [ "0" D ]"</div>
<div class="t" style="left:768.65px;top:548.94px;font-size:12px;color:#111;transform:scaleX(1.0109);">###" h"</div>
<div class="t" style="left:767.96px;top:561.94px;font-size:12px;color:#111;transform:scaleX(0.8623);">[$-de-CH]TTTT, T. MMMM JJJJ</div>
<div class="a" style="left:1129.8px;top:583.5px;width:74px;height:21.2px;background:#e1e1e1;border:1px solid #adadad;"></div>
<div class="t" style="left:1145.37px;top:588.34px;font-size:12px;color:#111;transform:scaleX(0.9402);">Löschen</div>
<div class="a" style="left:1146px;top:600px;width:6px;height:1px;background:#111;"></div>
<div class="t" style="left:632.41px;top:618.44px;font-size:12px;color:#111;transform:scaleX(0.9703);">Geben Sie Ihr Zahlenformat ein, unter Verwendung eines der bestehenden Zahlenformate als Ausgangspunkt.</div>
<div class="a" style="left:1055.6px;top:700.4px;width:73px;height:21.2px;background:#e1e1e1;border:2px solid #0078d7;"></div>
<div class="t" style="left:1083.72px;top:705.34px;font-size:12px;color:#111;transform:scaleX(0.9318);">OK</div>
<div class="a" style="left:1139.4px;top:700.4px;width:73.6px;height:21.2px;background:#e1e1e1;border:1px solid #adadad;"></div>
<div class="t" style="left:1147.68px;top:705.34px;font-size:12px;color:#111;">Abbrechen</div>
<svg style="left:0;top:0" width="1592" height="936">
<defs><filter id="sh" x="-20%" y="-20%" width="140%" height="150%"><feGaussianBlur in="SourceAlpha" stdDeviation="2"/><feOffset dx="2" dy="3"/><feComponentTransfer><feFuncA type="linear" slope="0.35"/></feComponentTransfer><feMerge><feMergeNode/><feMergeNode in="SourceGraphic"/></feMerge></filter></defs>
<g filter="url(#sh)" fill="none" stroke-linecap="round">
<path d="M700 62 C 760 52, 850 56, 873 78 C 886 97, 835 111, 765 111.5 C 692 112, 650 101, 650 86 C 650 70, 690 58, 760 55 C 790 54, 820 56, 840 60" stroke="#d41818" stroke-width="5"/>
<path d="M787 403 C 805 406, 816 412, 815 420 C 813 430, 790 434, 770 433 C 750 432, 740 426, 741 418 C 742 410, 752 405, 768 403 C 775 402, 780 402, 785 403" stroke="#c81a22" stroke-width="2.6"/>
<path d="M700 486 C 735 487, 752 494, 751 500 C 750 509, 715 515, 680 514 C 640 513, 608 506, 609 498 C 611 490, 640 485, 680 484 C 700 484, 720 485, 735 488" stroke="#c81a22" stroke-width="3"/>
</g></svg></body></html>
